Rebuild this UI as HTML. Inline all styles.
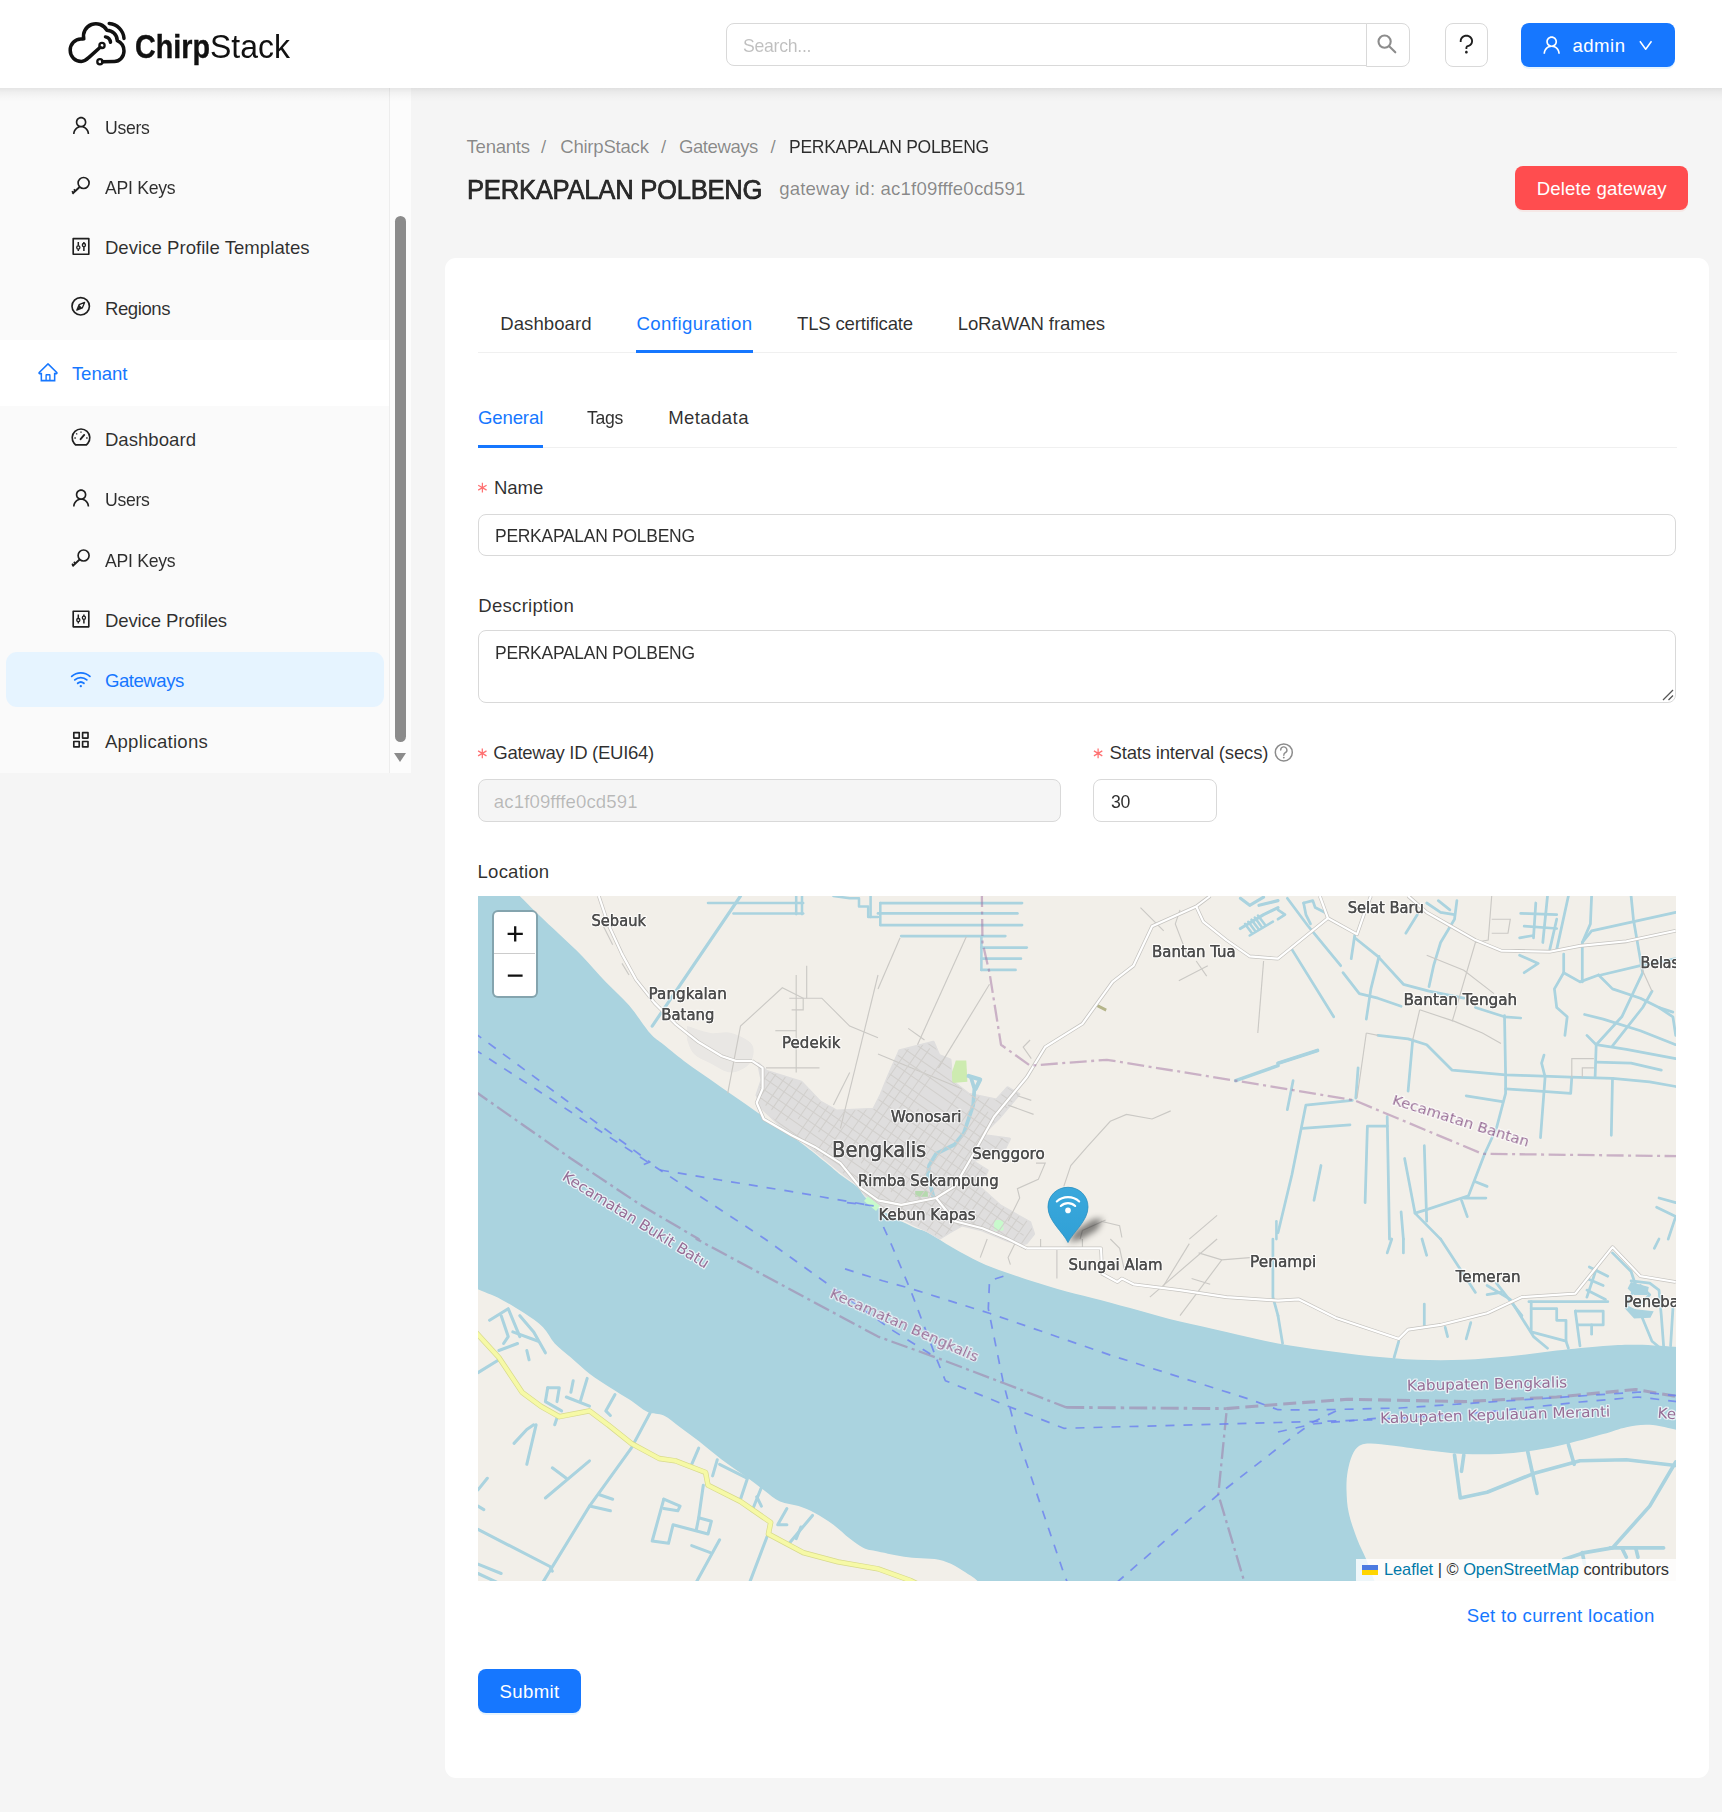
<!DOCTYPE html>
<html lang="en">
<head>
<meta charset="utf-8">
<title>ChirpStack - PERKAPALAN POLBENG</title>
<style>
*{box-sizing:border-box;margin:0;padding:0}
html,body{width:1722px;height:1812px;overflow:hidden;background:#f5f5f5}
body{position:relative;font-family:"Liberation Sans",sans-serif;color:rgba(0,0,0,0.88);font-size:18.6px}
.abs{position:absolute}
.t{position:absolute;z-index:7;white-space:nowrap;line-height:30px;height:30px;font-size:18.6px}
#header{position:absolute;left:0;top:0;width:1722px;height:88px;background:#fff;z-index:5}
#hshadow{position:absolute;left:0;top:88px;width:1722px;height:14px;background:linear-gradient(to bottom,rgba(0,0,0,0.085),rgba(0,0,0,0.045) 30%,rgba(0,0,0,0.015) 65%,rgba(0,0,0,0));z-index:6;pointer-events:none}
#sider{position:absolute;left:0;top:88px;width:390px;height:685px;background:#fafafa;border-right:1px solid #ededed}
#strack{position:absolute;left:390px;top:88px;width:21px;height:685px;background:#fcfcfc}
#sthumb{position:absolute;left:395px;top:216px;width:11px;height:526px;border-radius:6px;background:#8b8b8b}
#sarrow{position:absolute;left:394px;top:753px;width:0;height:0;border-left:6.5px solid transparent;border-right:6.5px solid transparent;border-top:9px solid #8b8b8b}
#tenantband{position:absolute;left:0;top:340px;width:389px;height:66px;background:#fff}
#selitem{position:absolute;left:5.5px;top:652px;width:378.5px;height:55px;border-radius:11px;background:#e6f4ff}
#card{position:absolute;left:445px;top:258px;width:1264px;height:1520px;background:#fff;border-radius:11px}
.inp{position:absolute;border:1.4px solid #d9d9d9;border-radius:8px;background:#fff}
.btn{position:absolute;border-radius:8px}
svg{position:absolute;overflow:visible}
</style>
</head>
<body>
<!-- header -->
<div id="header">
  <!-- logo -->
  <svg id="logo" style="left:0;top:0" width="140" height="88" viewBox="0 0 140 88" fill="none" stroke="#111" stroke-width="3.5" stroke-linecap="round" stroke-linejoin="round">
    <path d="M100.2 47.3 L88.7 57.6 C86.5 59.8 84 61.4 81.3 61.4 C75 61.4 70.2 56.5 70.2 50.2 C70.2 44 75 39 80.9 39 C81.8 39 82.9 39 83.8 38.8 A12.4 12.4 0 0 1 106.8 30.2 A10.7 10.7 0 0 1 117.3 40.6 C121.5 42.6 124 46.5 124 51 C124 57 119.5 61.5 114.4 61.5 L102.6 61.7"/>
    <path d="M109.2 23.5 A16 16 0 0 1 124 38.4"/>
    <path d="M105.5 36.9 A6.3 6.3 0 0 1 110.5 42.3"/>
    <circle cx="102" cy="45.4" r="2.6" stroke-width="2.3"/>
    <circle cx="99.9" cy="61.7" r="2.6" stroke-width="2.3"/>
  </svg>
  <span class="t" id="lg1" style="left:135.3px;top:25.7px;height:40px;line-height:40px;font-size:34px;font-weight:700;color:#111;transform-origin:0 0;transform:scaleX(0.845);-webkit-text-stroke:0.4px #111">Chirp</span>
  <span class="t" id="lg2" style="left:210.3px;top:25.7px;height:40px;line-height:40px;font-size:34px;font-weight:400;color:#111;transform-origin:0 0;transform:scaleX(0.94)">Stack</span>
  <!-- search -->
  <div class="inp" style="left:726px;top:23px;width:641px;height:42.8px;border-radius:8px 0 0 8px"></div>
  <div class="inp" style="left:1365.6px;top:23px;width:44px;height:43.8px;border-radius:0 8px 8px 0"></div>
  <svg style="left:1376.3px;top:32.6px" width="22" height="22" viewBox="0 0 22 22" fill="none" stroke="#8c8c8c" stroke-width="2.1" stroke-linecap="round"><circle cx="8.6" cy="8.6" r="6.1"/><path d="M13.2 13.2 L19.3 19.3"/></svg>
  <!-- help -->
  <div class="inp" style="left:1444.5px;top:23px;width:43.5px;height:44px"></div>
  <!-- admin -->
  <div class="btn" style="left:1521px;top:23px;width:153.5px;height:44px;background:#1677ff;box-shadow:0 2px 0 rgba(5,145,255,0.1)"></div>
</div>
<div id="hshadow"></div>
<!-- sider -->
<div id="sider"></div>
<div id="tenantband"></div>
<div id="selitem"></div>
<div id="strack"></div><div id="sthumb"></div><div id="sarrow"></div>
<!-- content -->
<div class="btn" style="left:1514.7px;top:166.4px;width:173.5px;height:43.6px;background:#ff4d4f;box-shadow:0 2px 0 rgba(255,38,5,0.06)"></div>
<div id="card"></div>
<!-- tabs lines -->
<div class="abs" style="left:477.5px;top:351.6px;width:1199px;height:1.4px;background:#f0f0f0"></div>
<div class="abs" style="left:636px;top:350.2px;width:117px;height:2.8px;background:#1677ff"></div>
<div class="abs" style="left:477.5px;top:446.6px;width:1199px;height:1.4px;background:#f0f0f0"></div>
<div class="abs" style="left:477.9px;top:445.2px;width:65.5px;height:2.8px;background:#1677ff"></div>
<!-- inputs -->
<div class="inp" style="left:477.6px;top:513.6px;width:1198.6px;height:42.4px"></div>
<div class="inp" style="left:477.6px;top:630.1px;width:1198.6px;height:73.3px"></div>
<svg style="left:1662px;top:689px" width="12" height="12" viewBox="0 0 12 12" stroke="#555" stroke-width="1.3" fill="none"><path d="M1 11 L11 1 M6.5 11 L11 6.5"/></svg>
<div class="inp" style="left:477.6px;top:779.2px;width:583px;height:43px;background:#f5f5f5"></div>
<div class="inp" style="left:1093.3px;top:779.2px;width:123.4px;height:43px"></div>
<!-- submit -->
<div class="btn" style="left:478px;top:1669.4px;width:102.8px;height:43.4px;background:#1677ff;box-shadow:0 2px 0 rgba(5,145,255,0.1)"></div>
<!-- sidebar icons -->
<svg id="icons" style="left:0;top:0;z-index:7" width="420" height="780" viewBox="0 0 420 780" fill="none" stroke="#1f1f1f" stroke-width="1.65" stroke-linecap="butt" stroke-linejoin="round">
  <defs>
    <path id="i-user" d="M858.5 763.6a374 374 0 00-80.6-119.5 375.63 375.63 0 00-119.5-80.6c-.4-.2-.8-.3-1.200-.500C719.500 518 760 444.700 760 362c0-137-111-248-248-248S264 225 264 362c0 82.700 40.500 156 102.800 201.100-.400.200-.800.300-1.200.500-44.800 18.900-85 46-119.500 80.600a375.630 375.630 0 00-80.600 119.500A371.700 371.700 0 00136 901.800a8 8 0 008 8.200h60c4.400 0 7.900-3.500 8-7.800 2-77.200 33-149.500 87.800-204.300 56.700-56.700 132-87.900 212.200-87.900s155.500 31.200 212.200 87.900C779 752.700 810 825 812 902.200c.1 4.400 3.600 7.800 8 7.800h60a8 8 0 008-8.200c-1-47.800-10.900-94.300-29.500-138.200zM512 534c-45.900 0-89.100-17.900-121.600-50.400S340 407.900 340 362c0-45.900 17.900-89.100 50.400-121.600S466.100 190 512 190s89.100 17.900 121.600 50.400S684 316.100 684 362c0 45.900-17.900 89.100-50.400 121.600S557.900 534 512 534z" fill="#1f1f1f" stroke="none"/>
    <g id="i-key"><circle cx="13.6" cy="7.6" r="5.5"/><path d="M9.6 11.6 L2.4 18.4" stroke-width="1.9"/><path d="M5.6 15.7 L3.8 14 M3.6 17.5 L1.9 15.8" stroke-width="1.5"/></g>
    <g id="i-control"><rect x="3.2" y="3.2" width="15.6" height="15.6"/><path d="M8.3 6.6 V10.4 M8.3 13.8 V15.6 M13.9 6.6 V8 M13.9 11.4 V15.6" stroke-width="1.5"/><circle cx="8.3" cy="12.1" r="1.6" stroke-width="1.3"/><circle cx="13.9" cy="9.7" r="1.6" stroke-width="1.3"/></g>
    <g id="i-compass"><circle cx="11" cy="11" r="8.7"/><path d="M14.9 7.1 L12.6 12.6 L7.1 14.9 L9.4 9.4 Z" stroke-width="1.3"/><path d="M9.6 9.6 L12.4 12.4 L7.4 14.6Z" fill="#1f1f1f" stroke="none"/></g>
    <g id="i-dash"><path d="M4.2 16.4 A8.8 8.8 0 1 1 17.8 16.4 L16.4 17.9 H5.6 Z"/><path d="M10.6 12.2 L14.2 7.9" stroke-width="1.9" stroke-linecap="round"/><path d="M11 4.4 V5.8 M6.2 6.4 L7.2 7.4 M4.4 11 H5.8 M16.2 11 H17.6" stroke-width="1.3"/></g>
    <g id="i-wifi" stroke-linecap="round"><path d="M1.9 8.2 A13.4 13.4 0 0 1 20.1 8.2" stroke-width="1.8"/><path d="M5 11.7 A9 9 0 0 1 17 11.7" stroke-width="1.8"/><path d="M7.9 15.1 A4.8 4.8 0 0 1 14.1 15.1" stroke-width="1.8"/><circle cx="11" cy="18" r="1.15" fill="#1677ff" stroke="none"/></g>
    <g id="i-app"><rect x="3.9" y="3.9" width="5.4" height="5.4"/><rect x="12.7" y="3.9" width="5.4" height="5.4"/><rect x="3.9" y="12.7" width="5.4" height="5.4"/><rect x="12.7" y="12.7" width="5.4" height="5.4"/></g>
    <path id="i-home" d="M946.5 505L560.1 118.8l-25.900-25.900a31.500 31.500 0 00-44.400 0L77.500 505a63.900 63.900 0 00-18.800 46c.4 35.200 29.700 63.300 64.900 63.300h42.500V940h691.800V614.300h43.400c17.100 0 33.200-6.700 45.300-18.800a63.600 63.600 0 0018.700-45.300c0-17-6.700-33.100-18.800-45.200zM568 868H456V664h112v204zm217.900-325.700V868H632V640c0-22.100-17.900-40-40-40H432c-22.100 0-40 17.900-40 40v228H238.100V542.300h-96l370-369.700 23.100 23.100L882 542.300h-96.100z" fill="#1677ff" stroke="none"/>
  </defs>
  <use href="#i-user" transform="translate(70.1 114.4) scale(0.021484)"/>
  <use href="#i-key" transform="translate(70 175.4)"/>
  <use href="#i-control" transform="translate(70 235.4)"/>
  <use href="#i-compass" transform="translate(69.7 295.3)"/>
  <use href="#i-home" transform="translate(37 361.2) scale(0.021484)"/>
  <use href="#i-dash" transform="translate(70 427)"/>
  <use href="#i-user" transform="translate(70.1 486.9) scale(0.021484)"/>
  <use href="#i-key" transform="translate(70 547.9)"/>
  <use href="#i-control" transform="translate(70 608)"/>
  <g stroke="#1677ff"><use href="#i-wifi" transform="translate(69.8 668.2)"/></g>
  <use href="#i-app" transform="translate(69.9 728.8)"/>
</svg>
<svg id="hicons" style="left:0;top:0;z-index:8" width="1722" height="88" viewBox="0 0 1722 88">
  <path transform="translate(1540.5 33.8) scale(0.0218)" fill="#fff" d="M858.5 763.6a374 374 0 00-80.6-119.5 375.63 375.63 0 00-119.5-80.6c-.4-.2-.8-.3-1.200-.500C719.500 518 760 444.700 760 362c0-137-111-248-248-248S264 225 264 362c0 82.700 40.500 156 102.800 201.100-.400.200-.800.300-1.200.500-44.800 18.900-85 46-119.500 80.600a375.630 375.630 0 00-80.600 119.500A371.700 371.700 0 00136 901.800a8 8 0 008 8.200h60c4.400 0 7.900-3.500 8-7.800 2-77.200 33-149.500 87.800-204.300 56.700-56.700 132-87.900 212.200-87.900s155.500 31.200 212.200 87.900C779 752.700 810 825 812 902.200c.1 4.400 3.600 7.800 8 7.800h60a8 8 0 008-8.200c-1-47.800-10.900-94.300-29.500-138.200zM512 534c-45.900 0-89.100-17.900-121.600-50.400S340 407.900 340 362c0-45.900 17.900-89.100 50.400-121.600S466.100 190 512 190s89.100 17.900 121.600 50.400S684 316.100 684 362c0 45.900-17.900 89.100-50.400 121.600S557.900 534 512 534z"/>
  <path d="M1639.9 41.3 L1645.7 49.2 L1651.5 41.3" fill="none" stroke="#fff" stroke-width="1.5" stroke-linejoin="round"/>
  <path transform="translate(1454 31.8) scale(0.0242)" fill="#1f1f1f" d="M764 280.900c-14-30.600-33.900-58.100-59.300-81.600C653.100 151.400 584.600 125 512 125s-141.100 26.400-192.700 74.200c-25.400 23.600-45.300 51-59.300 81.700-14.600 32-22 65.900-22 100.900v27c0 6.200 5 11.200 11.200 11.200h54c6.200 0 11.200-5 11.200-11.200v-27c0-99.500 88.600-180.400 197.600-180.400s197.600 80.900 197.600 180.400c0 40.800-14.500 79.200-42 111.200-27.200 31.700-65.600 54.400-108.100 64-24.300 5.500-46.200 19.200-61.700 38.800a110.850 110.850 0 00-23.900 68.600v31.400c0 6.200 5 11.200 11.200 11.200h54c6.200 0 11.200-5 11.200-11.200v-31.400c0-15.700 10.900-29.500 26-32.900 58.400-13.200 111.400-44.700 149.300-88.700 19.100-22.300 34-47.100 44.300-74 10.700-27.900 16.100-57.200 16.100-87 0-35-7.400-69-22-100.900zM512 787c-30.900 0-56 25.100-56 56s25.100 56 56 56 56-25.100 56-56-25.100-56-56-56z"/>
</svg>
<svg id="ficons" style="left:0;top:0;z-index:7" width="1722" height="900" viewBox="0 0 1722 900" fill="none">
  <path d="M482.4 482.7 L482.4 492.5 M478.2 485.2 L486.6 490.1 M486.6 485.2 L478.2 490.1 M482.3 748.5 L482.3 758.3 M478.1 750.9 L486.5 755.9 M486.5 750.9 L478.1 755.9 M1098.1 748.5 L1098.1 758.3 M1093.9 750.9 L1102.3 755.9 M1102.3 750.9 L1093.9 755.9" stroke="#ff4d4f" stroke-opacity="0.8" stroke-width="1.25"/>
  <circle cx="1283.8" cy="752.4" r="8.5" stroke="#8c8c8c" stroke-width="1.5"/>
  <path d="M1280.7 750 A3.1 3.1 0 1 1 1285.3 752.7 C1284.2 753.4 1283.8 754 1283.8 755.2" stroke="#8c8c8c" stroke-width="1.4" stroke-linecap="round"/><circle cx="1283.8" cy="757.6" r="0.95" fill="#8c8c8c"/>
</svg>
<span class="t" id="s1" style="left:104.9px;top:112.5px;font-size:18.6px;color:rgba(0,0,0,0.82);letter-spacing:-0.300px;transform-origin:0 50%;transform:scaleX(0.948);">Users</span>
<span class="t" id="s2" style="left:104.9px;top:173.0px;font-size:18.6px;color:rgba(0,0,0,0.82);letter-spacing:-0.300px;transform-origin:0 50%;transform:scaleX(0.9491);">API Keys</span>
<span class="t" id="s3" style="left:104.9px;top:233.0px;font-size:18.6px;color:rgba(0,0,0,0.82);letter-spacing:0.018px;">Device Profile Templates</span>
<span class="t" id="s4" style="left:104.9px;top:293.5px;font-size:18.6px;color:rgba(0,0,0,0.82);letter-spacing:-0.422px;">Regions</span>
<span class="t" id="s5" style="left:71.9px;top:359.0px;font-size:18.6px;color:#1677ff;letter-spacing:-0.066px;">Tenant</span>
<span class="t" id="s6" style="left:104.9px;top:425.0px;font-size:18.6px;color:rgba(0,0,0,0.82);letter-spacing:0.016px;">Dashboard</span>
<span class="t" id="s7" style="left:104.9px;top:485.0px;font-size:18.6px;color:rgba(0,0,0,0.82);letter-spacing:-0.300px;transform-origin:0 50%;transform:scaleX(0.948);">Users</span>
<span class="t" id="s8" style="left:104.9px;top:545.5px;font-size:18.6px;color:rgba(0,0,0,0.82);letter-spacing:-0.300px;transform-origin:0 50%;transform:scaleX(0.9491);">API Keys</span>
<span class="t" id="s9" style="left:104.9px;top:606.0px;font-size:18.6px;color:rgba(0,0,0,0.82);letter-spacing:-0.123px;">Device Profiles</span>
<span class="t" id="s10" style="left:104.9px;top:666.0px;font-size:18.6px;color:#1677ff;letter-spacing:-0.470px;">Gateways</span>
<span class="t" id="s11" style="left:104.9px;top:726.5px;font-size:18.6px;color:rgba(0,0,0,0.82);letter-spacing:0.239px;">Applications</span>
<span class="t" id="h1" style="left:742.5px;top:30.5px;font-size:18.6px;color:rgba(0,0,0,0.25);letter-spacing:-0.300px;transform-origin:0 50%;transform:scaleX(0.9511);">Search...</span>
<span class="t" id="h2" style="left:1572.5px;top:30.5px;font-size:18.6px;color:#fff;letter-spacing:0.461px;">admin</span>
<span class="t" id="b1" style="left:466.6px;top:132.2px;font-size:18.6px;color:rgba(0,0,0,0.45);letter-spacing:-0.288px;">Tenants</span>
<span class="t" id="b2" style="left:541.0px;top:132.2px;font-size:18.6px;color:rgba(0,0,0,0.45);">/</span>
<span class="t" id="b3" style="left:560.2px;top:132.2px;font-size:18.6px;color:rgba(0,0,0,0.45);letter-spacing:-0.238px;">ChirpStack</span>
<span class="t" id="b4" style="left:661.0px;top:132.2px;font-size:18.6px;color:rgba(0,0,0,0.45);">/</span>
<span class="t" id="b5" style="left:679.0px;top:132.2px;font-size:18.6px;color:rgba(0,0,0,0.45);letter-spacing:-0.470px;">Gateways</span>
<span class="t" id="b6" style="left:770.5px;top:132.2px;font-size:18.6px;color:rgba(0,0,0,0.45);">/</span>
<span class="t" id="b7" style="left:789.4px;top:132.2px;font-size:18.6px;color:rgba(0,0,0,0.82);letter-spacing:-0.300px;transform-origin:0 50%;transform:scaleX(0.9412);">PERKAPALAN POLBENG</span>
<span class="t" id="t1" style="left:466.6px;top:174.8px;font-size:26.8px;color:rgba(0,0,0,0.82);letter-spacing:-0.300px;transform-origin:0 50%;transform:scaleX(0.9577);-webkit-text-stroke:0.65px rgba(0,0,0,0.88);">PERKAPALAN POLBENG</span>
<span class="t" id="t2" style="left:779.2px;top:174.3px;font-size:18.6px;color:rgba(0,0,0,0.45);letter-spacing:0.180px;">gateway id: ac1f09fffe0cd591</span>
<span class="t" id="t3" style="left:1536.7px;top:174.0px;font-size:18.6px;color:#fff;letter-spacing:0.125px;">Delete gateway</span>
<span class="t" id="a1" style="left:500.2px;top:308.5px;font-size:18.6px;color:rgba(0,0,0,0.82);letter-spacing:0.054px;">Dashboard</span>
<span class="t" id="a2" style="left:636.5px;top:308.5px;font-size:18.6px;color:#1677ff;letter-spacing:0.408px;">Configuration</span>
<span class="t" id="a3" style="left:797.0px;top:308.5px;font-size:18.6px;color:rgba(0,0,0,0.82);letter-spacing:-0.189px;">TLS certificate</span>
<span class="t" id="a4" style="left:957.7px;top:308.5px;font-size:18.6px;color:rgba(0,0,0,0.82);letter-spacing:-0.142px;">LoRaWAN frames</span>
<span class="t" id="c1" style="left:477.9px;top:403.3px;font-size:18.6px;color:#1677ff;letter-spacing:-0.126px;">General</span>
<span class="t" id="c2" style="left:587.2px;top:403.3px;font-size:18.6px;color:rgba(0,0,0,0.82);letter-spacing:-0.300px;transform-origin:0 50%;transform:scaleX(0.9484);">Tags</span>
<span class="t" id="c3" style="left:668.2px;top:403.3px;font-size:18.6px;color:rgba(0,0,0,0.82);letter-spacing:0.396px;">Metadata</span>
<span class="t" id="f2" style="left:493.9px;top:472.8px;font-size:18.6px;color:rgba(0,0,0,0.82);letter-spacing:-0.070px;">Name</span>
<span class="t" id="f3" style="left:494.6px;top:520.8px;font-size:18.6px;color:rgba(0,0,0,0.82);letter-spacing:-0.300px;transform-origin:0 50%;transform:scaleX(0.9407);">PERKAPALAN POLBENG</span>
<span class="t" id="f4" style="left:478.3px;top:590.6px;font-size:18.6px;color:rgba(0,0,0,0.82);letter-spacing:0.248px;">Description</span>
<span class="t" id="f5" style="left:494.6px;top:638.2px;font-size:18.6px;color:rgba(0,0,0,0.82);letter-spacing:-0.300px;transform-origin:0 50%;transform:scaleX(0.9407);">PERKAPALAN POLBENG</span>
<span class="t" id="f7" style="left:493.3px;top:738.4px;font-size:18.6px;color:rgba(0,0,0,0.82);letter-spacing:-0.316px;">Gateway ID (EUI64)</span>
<span class="t" id="f8" style="left:493.8px;top:786.5px;font-size:18.6px;color:rgba(0,0,0,0.25);letter-spacing:0.120px;">ac1f09fffe0cd591</span>
<span class="t" id="f10" style="left:1109.5px;top:738.4px;font-size:18.6px;color:rgba(0,0,0,0.82);letter-spacing:-0.218px;">Stats interval (secs)</span>
<span class="t" id="f11" style="left:1110.6px;top:786.5px;font-size:18.6px;color:rgba(0,0,0,0.82);letter-spacing:-0.300px;transform-origin:0 50%;transform:scaleX(0.9516);">30</span>
<span class="t" id="f12" style="left:477.6px;top:856.6px;font-size:18.6px;color:rgba(0,0,0,0.82);letter-spacing:0.184px;">Location</span>
<span class="t" id="f13" style="left:1466.7px;top:1600.8px;font-size:18.6px;color:#1677ff;letter-spacing:0.306px;">Set to current location</span>
<span class="t" id="f14" style="left:499.6px;top:1677.0px;font-size:18.6px;color:#fff;letter-spacing:0.325px;">Submit</span>
<div id="map" class="abs" style="left:477.8px;top:896px;width:1198.6px;height:684.8px;background:#f2efe9;overflow:hidden">
<svg style="left:-477.8px;top:-896px" width="1722" height="1812" viewBox="0 0 1722 1812">
<g id="tiles" filter="url(#soft)"><defs><filter id="soft" x="0" y="0" width="100%" height="100%" filterUnits="userSpaceOnUse"><feGaussianBlur stdDeviation="0.65"/></filter></defs>
<path d="M474 892 L519.8 892 L519.8 896 C522.9 899.1 531.8 908.2 538.4 914.6 C545.0 921.0 551.9 927.3 559.3 934.3 C566.6 941.3 574.8 948.4 582.5 956.4 C590.2 964.4 598.0 973.9 605.8 982 C613.5 990.1 621.6 996.7 629 1005.2 C636.4 1013.7 644.1 1026.4 649.9 1033 C655.7 1039.6 657.6 1039.7 663.8 1044.7 C670.0 1049.7 679.2 1057.4 687 1063.2 C694.8 1069.0 702.5 1074.1 710.3 1079.5 C718.0 1084.9 725.8 1090.4 733.5 1095.8 C741.2 1101.2 749.0 1106.6 756.7 1112 C764.5 1117.4 772.2 1122.9 780 1128.3 C787.8 1133.7 795.5 1138.7 803.2 1144.5 C810.9 1150.3 820.2 1158.1 826.4 1163.1 C832.6 1168.1 835.2 1170.7 840.4 1174.7 C845.6 1178.7 853.1 1183.1 857.4 1187 C861.7 1190.9 861.6 1193.9 866 1198 C870.4 1202.1 875.7 1206.6 883.6 1211.4 C891.5 1216.2 906.0 1223.5 913.2 1227 C920.5 1230.5 920.4 1228.8 927.1 1232.3 C933.8 1235.8 944.5 1243.1 953.2 1248 C961.9 1252.9 970.7 1257.9 979.4 1261.9 C988.1 1266.0 996.8 1269.1 1005.5 1272.3 C1014.2 1275.5 1021.4 1277.8 1031.6 1281 C1041.8 1284.2 1054.9 1288.3 1066.5 1291.5 C1078.1 1294.7 1089.0 1297.0 1101.3 1300.2 C1113.5 1303.4 1126.9 1307.2 1140 1310.7 C1153.1 1314.2 1165.6 1318.0 1180 1321.5 C1194.4 1325.0 1210.1 1328.2 1226.4 1331.9 C1242.7 1335.6 1261.7 1340.4 1278 1343.5 C1294.3 1346.6 1309.0 1348.4 1324.5 1350.5 C1340.0 1352.6 1355.4 1354.8 1370.9 1356.3 C1386.4 1357.8 1401.9 1359.2 1417.4 1359.8 C1432.9 1360.4 1448.3 1360.4 1463.8 1359.8 C1479.3 1359.2 1494.8 1357.8 1510.3 1356.3 C1525.8 1354.8 1541.2 1352.2 1556.7 1350.5 C1572.2 1348.8 1589.7 1346.9 1603.2 1345.9 C1616.8 1344.9 1625.2 1344.5 1638 1344.7 C1650.8 1344.9 1673.0 1346.6 1680 1347 L1680 1430.6 C1675.0 1429.6 1658.6 1425.4 1649.7 1424.8 C1640.8 1424.2 1634.2 1425.7 1626.4 1427.2 C1618.7 1428.8 1612.9 1431.4 1603.2 1434.1 C1593.5 1436.8 1580.0 1440.7 1568.4 1443.4 C1556.8 1446.1 1545.1 1448.7 1533.5 1450.4 C1521.9 1452.2 1510.3 1453.3 1498.7 1453.9 C1487.1 1454.5 1475.4 1454.5 1463.8 1453.9 C1452.2 1453.3 1440.6 1451.8 1429 1450.4 C1417.4 1449.0 1403.8 1446.9 1394.1 1445.7 C1384.4 1444.5 1376.7 1443.4 1370.9 1443.4 C1365.1 1443.4 1362.4 1443.8 1359.3 1445.7 C1356.2 1447.6 1354.2 1450.7 1352.3 1455 C1350.4 1459.3 1348.7 1465.5 1347.7 1471.3 C1346.7 1477.1 1346.3 1482.9 1346.5 1489.9 C1346.7 1496.9 1347.0 1505.0 1348.8 1513.1 C1350.5 1521.2 1354.1 1531.0 1357 1538.7 C1359.9 1546.5 1363.2 1552.0 1366.3 1559.6 C1369.4 1567.1 1374.0 1579.9 1375.6 1584 L980.2 1584 C978.7 1582.6 977.1 1579.7 970.9 1575.8 C964.7 1571.9 953.5 1563.8 943 1560.7 C932.5 1557.6 919.0 1558.8 908.2 1557.2 C897.4 1555.7 885.4 1553.0 878 1551.4 C870.6 1549.9 868.3 1550.0 863.6 1547.9 C858.9 1545.8 854.7 1542.5 849.7 1538.6 C844.7 1534.7 839.2 1529.0 833.4 1524.7 C827.6 1520.5 820.6 1516.2 814.8 1513.1 C809.0 1510.0 804.4 1508.0 798.6 1506.1 C792.8 1504.2 785.8 1504.2 780 1501.5 C774.2 1498.8 769.5 1494.2 763.7 1489.9 C757.9 1485.7 752.1 1481.0 745.1 1476 C738.1 1471.0 729.6 1465.5 721.9 1459.7 C714.2 1453.9 705.7 1446.4 698.7 1441 C691.7 1435.6 685.9 1431.5 680.1 1427.2 C674.3 1423.0 669.2 1418.0 663.8 1415.5 C658.4 1413.0 653.4 1414.7 647.6 1412 C641.8 1409.3 635.2 1403.3 629 1399.3 C622.8 1395.2 617.0 1392.0 610.4 1387.7 C603.8 1383.4 596.1 1378.7 589.5 1373.7 C582.9 1368.7 576.7 1362.5 570.9 1357.5 C565.1 1352.5 559.4 1348.5 554.7 1343.5 C550.1 1338.5 548.0 1332.3 543 1327.3 C538.0 1322.3 531.5 1317.9 524.5 1313.3 C517.5 1308.7 509.6 1303.7 501.2 1299.4 C492.8 1295.2 478.5 1289.7 474 1287.8 Z" fill="#aad3df"/>
<path d="M758.6 1063.7 L766.0 1071.1 L801.3 1082.3 L819.9 1101.8 L836.6 1111.1 L873.8 1109.2 L881.2 1094.3 L888.7 1075.8 L899.8 1050.7 L933.3 1042.3 L938.8 1055.3 L950.0 1060.0 L951.9 1081.3 L968.6 1094.3 L996.5 1099.9 L1007.6 1087.8 L1018.8 1094.3 L998.3 1118.5 L981.6 1135.2 L1009.5 1138.9 L1003.9 1150.1 L972.3 1161.2 L987.2 1170.5 L979.7 1187.3 L1000.2 1205.8 L1029.9 1222.6 L1033.6 1233.7 L1026.2 1243.0 L1020 1244 L1008 1240.5 L982.5 1230 L962 1225 L948 1233 L940 1238 L927.1 1230.5 L913.2 1224 L883.6 1208.5 L866 1195 L857.4 1184 L840.4 1171 L826.4 1159.5 L803.2 1141 L780 1125 L762 1108 L757 1095 L762 1080Z" fill="#dfdede" stroke="#dfdede" stroke-width="3" stroke-linejoin="round"/>
<path d="M687.1 1026.1 C691.0 1027.2 702.9 1031.8 710.3 1033.0 C717.6 1034.2 724.2 1031.0 731.2 1033.0 C738.2 1035.0 749.0 1039.7 752.1 1044.7 C755.2 1049.7 753.3 1058.6 749.8 1063.2 C746.3 1067.8 737.8 1072.5 731.2 1072.5 C724.6 1072.5 716.5 1066.3 710.3 1063.2 C704.1 1060.1 697.9 1057.9 694.0 1054.0 C690.1 1050.1 688.2 1042.3 687.1 1040.0Z" fill="#e9e7e4"/>
<path d="M955.8 1060.5 L966.3 1060.5 L967.4 1081.8 L952.3 1083.0 L951.9 1072.5Z" fill="#cdebb0"/>
<path d="M994.1 1220.0 L1003.4 1220.0 L1003.4 1230.5 L994.1 1230.5Z" fill="#c8facc"/>
<path d="M915.2 1191.0 L927.9 1191.0 L927.9 1196.8 L915.2 1196.8Z" fill="#b5d9ae"/>
<path d="M868 1196 L880 1206 L876 1211 L864 1201Z" fill="#c8facc"/>
<path d="M1097.5 1004.0 L1106.8 1008.7 L1105.6 1011.4 L1096.8 1007.0Z" fill="#b5b58a"/>
<path d="M740.5 896.0 L652.2 1026.1" stroke="#aad3df" fill="none" stroke-linecap="round" stroke-linejoin="round" stroke-width="3.15"/>
<path d="M708.0 903.0 L803.2 903.0" stroke="#aad3df" fill="none" stroke-linecap="round" stroke-linejoin="round" stroke-width="2.55"/>
<path d="M733.5 913.4 L803.2 913.4" stroke="#aad3df" fill="none" stroke-linecap="round" stroke-linejoin="round" stroke-width="2.55"/>
<path d="M796.2 896.0 L796.2 914.1" stroke="#aad3df" fill="none" stroke-linecap="round" stroke-linejoin="round" stroke-width="2.55"/>
<path d="M802.0 896.0 L802.0 914.1" stroke="#aad3df" fill="none" stroke-linecap="round" stroke-linejoin="round" stroke-width="2.55"/>
<path d="M833.4 896.0 L849.7 898.3 L859.0 898.3 L859.0 906.5 L868.2 906.5 L868.2 916.9 L878.0 916.9" stroke="#aad3df" fill="none" stroke-linecap="round" stroke-linejoin="round" stroke-width="2.55"/>
<path d="M870.6 896.0 L870.6 916.9" stroke="#aad3df" fill="none" stroke-linecap="round" stroke-linejoin="round" stroke-width="2.55"/>
<path d="M880.3 903.0 L1022.0 903.0" stroke="#aad3df" fill="none" stroke-linecap="round" stroke-linejoin="round" stroke-width="2.75"/>
<path d="M878.0 913.4 L1017.4 913.4" stroke="#aad3df" fill="none" stroke-linecap="round" stroke-linejoin="round" stroke-width="2.75"/>
<path d="M880.3 925.0 L1022.0 925.0" stroke="#aad3df" fill="none" stroke-linecap="round" stroke-linejoin="round" stroke-width="2.75"/>
<path d="M901.2 936.0 L1005.3 936.0" stroke="#aad3df" fill="none" stroke-linecap="round" stroke-linejoin="round" stroke-width="2.75"/>
<path d="M981.4 947.6 L1026.7 947.6" stroke="#aad3df" fill="none" stroke-linecap="round" stroke-linejoin="round" stroke-width="2.75"/>
<path d="M981.4 958.7 L1020.9 958.7" stroke="#aad3df" fill="none" stroke-linecap="round" stroke-linejoin="round" stroke-width="2.75"/>
<path d="M981.4 969.9 L1015.5 969.9" stroke="#aad3df" fill="none" stroke-linecap="round" stroke-linejoin="round" stroke-width="2.75"/>
<path d="M880.3 903.0 L880.3 925.0" stroke="#aad3df" fill="none" stroke-linecap="round" stroke-linejoin="round" stroke-width="2.55"/>
<path d="M981.4 936.0 L981.4 969.9" stroke="#aad3df" fill="none" stroke-linecap="round" stroke-linejoin="round" stroke-width="2.55"/>
<path d="M1278.0 1065.6 L1235.7 1080.7" stroke="#aad3df" fill="none" stroke-linecap="round" stroke-linejoin="round" stroke-width="3.55"/>
<path d="M1276.4 1221.2 L1276.4 1239.1" stroke="#aad3df" fill="none" stroke-linecap="round" stroke-linejoin="round" stroke-width="2.55"/>
<path d="M970.9 1077.2 L974.4 1088.8 L973.2 1105.1 L963.9 1132.9 L954.7 1144.5 L936.1 1153.8 L929.1 1165.5 L927.9 1174.7 L933.7 1198.0" stroke="#aad3df" fill="none" stroke-linecap="round" stroke-linejoin="round" stroke-width="3.75"/>
<path d="M968.6 1076.0 L980.2 1079.5 L975.6 1088.8" stroke="#aad3df" fill="none" stroke-linecap="round" stroke-linejoin="round" stroke-width="4.15"/>
<path d="M1240.4 898.3 L1249.7 905.3 L1263.6 897.2" stroke="#aad3df" fill="none" stroke-linecap="round" stroke-linejoin="round" stroke-width="3.15"/>
<path d="M1259.0 905.3 L1278.0 900.6" stroke="#aad3df" fill="none" stroke-linecap="round" stroke-linejoin="round" stroke-width="3.15"/>
<path d="M1240.4 928.5 L1263.6 914.6 L1278.0 907.6" stroke="#aad3df" fill="none" stroke-linecap="round" stroke-linejoin="round" stroke-width="3.15"/>
<path d="M1245.0 923.9 L1252.0 933.2" stroke="#aad3df" fill="none" stroke-linecap="round" stroke-linejoin="round" stroke-width="2.55"/>
<path d="M1248.3 921.8 L1255.2 931.1" stroke="#aad3df" fill="none" stroke-linecap="round" stroke-linejoin="round" stroke-width="2.55"/>
<path d="M1251.5 919.7 L1258.5 929.0" stroke="#aad3df" fill="none" stroke-linecap="round" stroke-linejoin="round" stroke-width="2.55"/>
<path d="M1254.8 917.6 L1261.7 926.9" stroke="#aad3df" fill="none" stroke-linecap="round" stroke-linejoin="round" stroke-width="2.55"/>
<path d="M1258.0 915.5 L1265.0 924.8" stroke="#aad3df" fill="none" stroke-linecap="round" stroke-linejoin="round" stroke-width="2.55"/>
<path d="M1249.7 935.5 L1272.9 921.6" stroke="#aad3df" fill="none" stroke-linecap="round" stroke-linejoin="round" stroke-width="2.55"/>
<path d="M1291.9 949.4 L1333.7 1016.8" stroke="#aad3df" fill="none" stroke-linecap="round" stroke-linejoin="round" stroke-width="2.75"/>
<path d="M1287.3 898.3 L1308.2 926.2 L1340.7 965.7" stroke="#aad3df" fill="none" stroke-linecap="round" stroke-linejoin="round" stroke-width="2.75"/>
<path d="M1354.7 937.8 L1377.9 956.4 L1403.4 984.3 L1429.0 991.2 L1463.8 998.2" stroke="#aad3df" fill="none" stroke-linecap="round" stroke-linejoin="round" stroke-width="2.75"/>
<path d="M1343.0 972.7 L1359.3 993.6 L1377.9 998.2 L1401.1 1006.3" stroke="#aad3df" fill="none" stroke-linecap="round" stroke-linejoin="round" stroke-width="2.75"/>
<path d="M1379.0 956.4 L1370.9 988.9 L1366.3 1019.1" stroke="#aad3df" fill="none" stroke-linecap="round" stroke-linejoin="round" stroke-width="2.75"/>
<path d="M1354.7 935.5 L1351.2 958.7" stroke="#aad3df" fill="none" stroke-linecap="round" stroke-linejoin="round" stroke-width="2.75"/>
<path d="M1456.9 900.6 L1454.5 919.2 L1440.6 942.5 L1433.6 965.7 L1429.0 986.6" stroke="#aad3df" fill="none" stroke-linecap="round" stroke-linejoin="round" stroke-width="2.75"/>
<path d="M1417.4 914.6 L1405.8 933.2" stroke="#aad3df" fill="none" stroke-linecap="round" stroke-linejoin="round" stroke-width="2.75"/>
<path d="M1426.7 903.0 L1440.6 912.3 L1454.5 914.6" stroke="#aad3df" fill="none" stroke-linecap="round" stroke-linejoin="round" stroke-width="2.75"/>
<path d="M1438.3 900.6 L1449.9 909.9" stroke="#aad3df" fill="none" stroke-linecap="round" stroke-linejoin="round" stroke-width="2.75"/>
<path d="M1377.9 1035.4 L1408.1 1038.9 L1426.7 1044.7 L1452.2 1070.2 L1505.6 1074.9 L1570.7 1077.2 L1612.5 1078.3 L1649.7 1081.8 L1675.7 1086.5" stroke="#aad3df" fill="none" stroke-linecap="round" stroke-linejoin="round" stroke-width="2.75"/>
<path d="M1412.7 1040.0 L1408.1 1091.1" stroke="#aad3df" fill="none" stroke-linecap="round" stroke-linejoin="round" stroke-width="2.75"/>
<path d="M1504.5 1015.6 L1505.6 1074.9 L1505.6 1093.4 L1496.4 1128.3 L1484.7 1153.8 L1468.5 1195.7 L1426.7 1209.6 L1415.0 1213.1" stroke="#aad3df" fill="none" stroke-linecap="round" stroke-linejoin="round" stroke-width="2.75"/>
<path d="M1475.4 1007.5 L1504.5 1016.8 L1520.7 1018.0" stroke="#aad3df" fill="none" stroke-linecap="round" stroke-linejoin="round" stroke-width="2.75"/>
<path d="M1505.6 1088.8 L1570.7 1093.4 L1571.8 1077.2" stroke="#aad3df" fill="none" stroke-linecap="round" stroke-linejoin="round" stroke-width="2.75"/>
<path d="M1466.2 1095.8 L1502.2 1101.6" stroke="#aad3df" fill="none" stroke-linecap="round" stroke-linejoin="round" stroke-width="2.75"/>
<path d="M1544.0 1055.1 L1541.6 1063.2 L1545.1 1077.2 L1540.5 1137.6" stroke="#aad3df" fill="none" stroke-linecap="round" stroke-linejoin="round" stroke-width="2.75"/>
<path d="M1612.5 1078.3 L1611.3 1135.3" stroke="#aad3df" fill="none" stroke-linecap="round" stroke-linejoin="round" stroke-width="2.75"/>
<path d="M1595.1 1077.2 L1596.2 1044.7 L1621.8 1016.8 L1642.7 972.7 L1633.4 919.2 L1631.1 896.0" stroke="#aad3df" fill="none" stroke-linecap="round" stroke-linejoin="round" stroke-width="2.75"/>
<path d="M1586.9 1035.4 L1596.2 1044.7 L1626.4 1049.3 L1675.7 1058.6" stroke="#aad3df" fill="none" stroke-linecap="round" stroke-linejoin="round" stroke-width="2.75"/>
<path d="M1596.2 1062.1 L1631.1 1063.2 L1661.3 1070.2" stroke="#aad3df" fill="none" stroke-linecap="round" stroke-linejoin="round" stroke-width="2.75"/>
<path d="M1584.6 1014.5 L1603.2 1019.1 L1640.4 1030.7 L1675.7 1044.7" stroke="#aad3df" fill="none" stroke-linecap="round" stroke-linejoin="round" stroke-width="2.75"/>
<path d="M1612.5 1045.8 L1642.7 1007.5 L1652.0 991.2" stroke="#aad3df" fill="none" stroke-linecap="round" stroke-linejoin="round" stroke-width="2.75"/>
<path d="M1598.6 975.0 L1612.5 988.9 L1640.4 998.2 L1659.0 1007.5 L1672.9 1016.8 L1675.7 1035.4" stroke="#aad3df" fill="none" stroke-linecap="round" stroke-linejoin="round" stroke-width="2.75"/>
<path d="M1600.9 975.0 L1640.4 965.7 L1675.7 958.7" stroke="#aad3df" fill="none" stroke-linecap="round" stroke-linejoin="round" stroke-width="2.75"/>
<path d="M1582.3 981.9 L1582.3 942.5 L1591.6 930.8 L1675.7 912.3" stroke="#aad3df" fill="none" stroke-linecap="round" stroke-linejoin="round" stroke-width="2.75"/>
<path d="M1563.7 954.1 L1563.7 972.7 L1554.4 988.9 L1556.7 1007.5 L1567.2 1016.8 L1564.9 1035.4" stroke="#aad3df" fill="none" stroke-linecap="round" stroke-linejoin="round" stroke-width="2.75"/>
<path d="M1563.7 972.7 L1580.0 981.9 L1598.6 975.0" stroke="#aad3df" fill="none" stroke-linecap="round" stroke-linejoin="round" stroke-width="2.75"/>
<path d="M1520.7 913.4 L1556.7 914.6" stroke="#aad3df" fill="none" stroke-linecap="round" stroke-linejoin="round" stroke-width="2.75"/>
<path d="M1524.2 926.2 L1556.7 928.5" stroke="#aad3df" fill="none" stroke-linecap="round" stroke-linejoin="round" stroke-width="2.75"/>
<path d="M1519.6 937.8 L1533.5 935.5" stroke="#aad3df" fill="none" stroke-linecap="round" stroke-linejoin="round" stroke-width="2.75"/>
<path d="M1535.8 903.0 L1533.5 937.8" stroke="#aad3df" fill="none" stroke-linecap="round" stroke-linejoin="round" stroke-width="2.75"/>
<path d="M1547.5 896.0 L1542.8 942.5" stroke="#aad3df" fill="none" stroke-linecap="round" stroke-linejoin="round" stroke-width="2.75"/>
<path d="M1556.7 919.2 L1549.8 949.4" stroke="#aad3df" fill="none" stroke-linecap="round" stroke-linejoin="round" stroke-width="2.75"/>
<path d="M1568.4 896.0 L1556.7 949.4" stroke="#aad3df" fill="none" stroke-linecap="round" stroke-linejoin="round" stroke-width="2.75"/>
<path d="M1519.6 955.2 L1538.2 963.4 L1524.2 972.7" stroke="#aad3df" fill="none" stroke-linecap="round" stroke-linejoin="round" stroke-width="2.75"/>
<path d="M1591.6 896.0 L1590.4 923.9 L1582.3 942.5" stroke="#aad3df" fill="none" stroke-linecap="round" stroke-linejoin="round" stroke-width="2.75"/>
<path d="M1278.0 1063.2 L1317.5 1050.5" stroke="#aad3df" fill="none" stroke-linecap="round" stroke-linejoin="round" stroke-width="2.75"/>
<path d="M1293.1 1080.7 L1287.3 1109.7" stroke="#aad3df" fill="none" stroke-linecap="round" stroke-linejoin="round" stroke-width="2.75"/>
<path d="M1358.1 1067.9 L1355.8 1098.1" stroke="#aad3df" fill="none" stroke-linecap="round" stroke-linejoin="round" stroke-width="2.75"/>
<path d="M1352.3 1100.4 L1305.9 1105.1 L1291.9 1174.7 L1278.0 1232.8" stroke="#aad3df" fill="none" stroke-linecap="round" stroke-linejoin="round" stroke-width="2.75"/>
<path d="M1302.4 1128.3 L1350.0 1124.8" stroke="#aad3df" fill="none" stroke-linecap="round" stroke-linejoin="round" stroke-width="2.75"/>
<path d="M1387.2 1126.0 L1367.4 1126.0 L1365.1 1202.6" stroke="#aad3df" fill="none" stroke-linecap="round" stroke-linejoin="round" stroke-width="2.75"/>
<path d="M1387.2 1116.7 L1389.5 1239.1" stroke="#aad3df" fill="none" stroke-linecap="round" stroke-linejoin="round" stroke-width="2.75"/>
<path d="M1321.0 1165.5 L1314.0 1200.3" stroke="#aad3df" fill="none" stroke-linecap="round" stroke-linejoin="round" stroke-width="2.75"/>
<path d="M1424.3 1145.7 L1426.7 1221.2" stroke="#aad3df" fill="none" stroke-linecap="round" stroke-linejoin="round" stroke-width="2.75"/>
<path d="M1404.6 1158.5 L1415.0 1213.1 L1440.6 1239.1" stroke="#aad3df" fill="none" stroke-linecap="round" stroke-linejoin="round" stroke-width="2.75"/>
<path d="M1463.8 1198.0 L1485.9 1198.0" stroke="#aad3df" fill="none" stroke-linecap="round" stroke-linejoin="round" stroke-width="2.75"/>
<path d="M1475.4 1181.7 L1487.1 1186.4" stroke="#aad3df" fill="none" stroke-linecap="round" stroke-linejoin="round" stroke-width="2.75"/>
<path d="M1461.5 1200.3 L1467.3 1216.6" stroke="#aad3df" fill="none" stroke-linecap="round" stroke-linejoin="round" stroke-width="2.75"/>
<path d="M1401.1 1211.9 L1403.4 1239.1" stroke="#aad3df" fill="none" stroke-linecap="round" stroke-linejoin="round" stroke-width="2.75"/>
<path d="M1659.0 1198.0 L1675.7 1202.6" stroke="#aad3df" fill="none" stroke-linecap="round" stroke-linejoin="round" stroke-width="2.75"/>
<path d="M1656.6 1207.3 L1675.7 1216.6 L1668.2 1239.1" stroke="#aad3df" fill="none" stroke-linecap="round" stroke-linejoin="round" stroke-width="2.75"/>
<path d="M1659.0 1007.5 L1672.9 1012.1" stroke="#aad3df" fill="none" stroke-linecap="round" stroke-linejoin="round" stroke-width="2.75"/>
<path d="M1278.0 909.9 L1285.0 914.6 L1278.0 919.2" stroke="#aad3df" fill="none" stroke-linecap="round" stroke-linejoin="round" stroke-width="2.75"/>
<path d="M1303.6 903.0 L1312.8 900.6 L1315.2 907.6 L1324.5 912.3" stroke="#aad3df" fill="none" stroke-linecap="round" stroke-linejoin="round" stroke-width="2.75"/>
<path d="M1303.6 903.0 L1305.9 914.6 L1310.5 923.9" stroke="#aad3df" fill="none" stroke-linecap="round" stroke-linejoin="round" stroke-width="2.75"/>
<path d="M1278.0 1063.2 L1317.5 1050.5" stroke="#aad3df" fill="none" stroke-linecap="round" stroke-linejoin="round" stroke-width="3.75"/>
<path d="M649.9 1413.2 L631.3 1448.1 L589.5 1506.1 L543.0 1582.1" stroke="#aad3df" fill="none" stroke-linecap="round" stroke-linejoin="round" stroke-width="3.05"/>
<path d="M589.5 1506.1 L610.4 1510.8" stroke="#aad3df" fill="none" stroke-linecap="round" stroke-linejoin="round" stroke-width="3.05"/>
<path d="M598.8 1494.5 L612.7 1499.2" stroke="#aad3df" fill="none" stroke-linecap="round" stroke-linejoin="round" stroke-width="3.05"/>
<path d="M478.0 1529.4 L550.0 1566.5 L552.3 1571.2" stroke="#aad3df" fill="none" stroke-linecap="round" stroke-linejoin="round" stroke-width="3.05"/>
<path d="M478.0 1564.2 L501.2 1573.5" stroke="#aad3df" fill="none" stroke-linecap="round" stroke-linejoin="round" stroke-width="3.05"/>
<path d="M478.0 1573.5 L496.6 1582.1" stroke="#aad3df" fill="none" stroke-linecap="round" stroke-linejoin="round" stroke-width="3.05"/>
<path d="M545.4 1498.0 L589.5 1460.8" stroke="#aad3df" fill="none" stroke-linecap="round" stroke-linejoin="round" stroke-width="3.05"/>
<path d="M552.3 1467.8 L566.3 1478.3" stroke="#aad3df" fill="none" stroke-linecap="round" stroke-linejoin="round" stroke-width="3.05"/>
<path d="M533.7 1424.8 L526.8 1429.5 L514.0 1443.4" stroke="#aad3df" fill="none" stroke-linecap="round" stroke-linejoin="round" stroke-width="3.05"/>
<path d="M536.1 1424.8 L526.8 1464.3" stroke="#aad3df" fill="none" stroke-linecap="round" stroke-linejoin="round" stroke-width="3.05"/>
<path d="M478.0 1372.6 L498.9 1359.8" stroke="#aad3df" fill="none" stroke-linecap="round" stroke-linejoin="round" stroke-width="3.05"/>
<path d="M487.3 1478.3 L478.0 1489.9" stroke="#aad3df" fill="none" stroke-linecap="round" stroke-linejoin="round" stroke-width="3.05"/>
<path d="M478.0 1506.1 L483.8 1509.6" stroke="#aad3df" fill="none" stroke-linecap="round" stroke-linejoin="round" stroke-width="3.05"/>
<path d="M489.6 1320.3 L508.2 1308.7 L519.8 1336.6" stroke="#aad3df" fill="none" stroke-linecap="round" stroke-linejoin="round" stroke-width="3.05"/>
<path d="M501.2 1315.7 L508.2 1336.6 L503.6 1343.5" stroke="#aad3df" fill="none" stroke-linecap="round" stroke-linejoin="round" stroke-width="3.05"/>
<path d="M519.8 1315.7 L533.7 1331.9 L545.4 1352.8" stroke="#aad3df" fill="none" stroke-linecap="round" stroke-linejoin="round" stroke-width="3.05"/>
<path d="M512.8 1331.9 L538.4 1341.2" stroke="#aad3df" fill="none" stroke-linecap="round" stroke-linejoin="round" stroke-width="3.05"/>
<path d="M526.8 1350.5 L529.1 1359.8" stroke="#aad3df" fill="none" stroke-linecap="round" stroke-linejoin="round" stroke-width="3.05"/>
<path d="M498.9 1350.5 L517.5 1343.5" stroke="#aad3df" fill="none" stroke-linecap="round" stroke-linejoin="round" stroke-width="3.05"/>
<path d="M547.7 1387.7 L545.4 1401.6 L561.6 1410.9" stroke="#aad3df" fill="none" stroke-linecap="round" stroke-linejoin="round" stroke-width="3.05"/>
<path d="M547.7 1387.7 L559.3 1387.7 L557.0 1401.6" stroke="#aad3df" fill="none" stroke-linecap="round" stroke-linejoin="round" stroke-width="3.05"/>
<path d="M573.2 1380.7 L570.9 1392.3" stroke="#aad3df" fill="none" stroke-linecap="round" stroke-linejoin="round" stroke-width="3.05"/>
<path d="M587.2 1378.4 L580.2 1401.6" stroke="#aad3df" fill="none" stroke-linecap="round" stroke-linejoin="round" stroke-width="3.05"/>
<path d="M615.0 1394.6 L605.8 1410.9 L610.4 1415.5" stroke="#aad3df" fill="none" stroke-linecap="round" stroke-linejoin="round" stroke-width="3.05"/>
<path d="M566.3 1397.0 L589.5 1406.2" stroke="#aad3df" fill="none" stroke-linecap="round" stroke-linejoin="round" stroke-width="3.05"/>
<path d="M557.0 1417.9 L554.7 1424.8" stroke="#aad3df" fill="none" stroke-linecap="round" stroke-linejoin="round" stroke-width="3.05"/>
<path d="M698.7 1448.1 L691.7 1464.3" stroke="#aad3df" fill="none" stroke-linecap="round" stroke-linejoin="round" stroke-width="3.05"/>
<path d="M717.3 1459.7 L712.6 1475.9" stroke="#aad3df" fill="none" stroke-linecap="round" stroke-linejoin="round" stroke-width="3.05"/>
<path d="M719.6 1464.3 L747.5 1478.3 L740.5 1499.2" stroke="#aad3df" fill="none" stroke-linecap="round" stroke-linejoin="round" stroke-width="3.05"/>
<path d="M761.4 1487.5 L752.1 1510.8" stroke="#aad3df" fill="none" stroke-linecap="round" stroke-linejoin="round" stroke-width="3.05"/>
<path d="M756.7 1496.8 L761.4 1506.1" stroke="#aad3df" fill="none" stroke-linecap="round" stroke-linejoin="round" stroke-width="3.05"/>
<path d="M786.9 1508.5 L777.7 1524.7 L786.9 1524.7" stroke="#aad3df" fill="none" stroke-linecap="round" stroke-linejoin="round" stroke-width="3.05"/>
<path d="M812.5 1515.4 L789.3 1543.3" stroke="#aad3df" fill="none" stroke-linecap="round" stroke-linejoin="round" stroke-width="3.05"/>
<path d="M800.9 1527.0 L796.2 1538.7" stroke="#aad3df" fill="none" stroke-linecap="round" stroke-linejoin="round" stroke-width="3.05"/>
<path d="M703.3 1485.2 L698.7 1517.7 L696.4 1529.4" stroke="#aad3df" fill="none" stroke-linecap="round" stroke-linejoin="round" stroke-width="3.05"/>
<path d="M663.8 1499.2 L652.2 1541.0 L668.5 1543.3 L673.1 1524.7 L708.0 1534.0 L711.4 1521.2 L698.7 1517.7" stroke="#aad3df" fill="none" stroke-linecap="round" stroke-linejoin="round" stroke-width="3.05"/>
<path d="M663.8 1499.2 L680.1 1506.1 L677.8 1510.8 L663.8 1508.5" stroke="#aad3df" fill="none" stroke-linecap="round" stroke-linejoin="round" stroke-width="3.05"/>
<path d="M691.7 1545.6 L710.3 1552.6" stroke="#aad3df" fill="none" stroke-linecap="round" stroke-linejoin="round" stroke-width="3.05"/>
<path d="M719.6 1539.8 L696.4 1582.1" stroke="#aad3df" fill="none" stroke-linecap="round" stroke-linejoin="round" stroke-width="3.05"/>
<path d="M767.2 1536.3 L749.8 1582.1" stroke="#aad3df" fill="none" stroke-linecap="round" stroke-linejoin="round" stroke-width="3.05"/>
<path d="M1272.9 1239.0 L1272.9 1297.1 L1278.0 1315.7" stroke="#aad3df" fill="none" stroke-linecap="round" stroke-linejoin="round" stroke-width="2.75"/>
<path d="M1391.8 1239.0 L1387.2 1252.9" stroke="#aad3df" fill="none" stroke-linecap="round" stroke-linejoin="round" stroke-width="2.75"/>
<path d="M1403.4 1239.0 L1403.4 1252.9" stroke="#aad3df" fill="none" stroke-linecap="round" stroke-linejoin="round" stroke-width="2.75"/>
<path d="M1422.0 1239.0 L1426.7 1255.3" stroke="#aad3df" fill="none" stroke-linecap="round" stroke-linejoin="round" stroke-width="2.75"/>
<path d="M1440.6 1239.0 L1475.4 1292.4" stroke="#aad3df" fill="none" stroke-linecap="round" stroke-linejoin="round" stroke-width="2.75"/>
<path d="M1424.3 1304.0 L1424.3 1327.3" stroke="#aad3df" fill="none" stroke-linecap="round" stroke-linejoin="round" stroke-width="2.75"/>
<path d="M1470.8 1322.6 L1466.2 1338.9" stroke="#aad3df" fill="none" stroke-linecap="round" stroke-linejoin="round" stroke-width="2.75"/>
<path d="M1398.8 1341.2 L1394.1 1357.5" stroke="#aad3df" fill="none" stroke-linecap="round" stroke-linejoin="round" stroke-width="2.75"/>
<path d="M1278.0 1315.7 L1282.6 1343.5" stroke="#aad3df" fill="none" stroke-linecap="round" stroke-linejoin="round" stroke-width="2.75"/>
<path d="M1445.2 1327.3 L1447.6 1336.6" stroke="#aad3df" fill="none" stroke-linecap="round" stroke-linejoin="round" stroke-width="2.75"/>
<path d="M1487.1 1285.5 L1510.3 1299.4 L1533.5 1336.6 L1547.5 1348.2" stroke="#aad3df" fill="none" stroke-linecap="round" stroke-linejoin="round" stroke-width="2.75"/>
<path d="M1496.4 1283.1 L1521.9 1315.7" stroke="#aad3df" fill="none" stroke-linecap="round" stroke-linejoin="round" stroke-width="2.75"/>
<path d="M1487.1 1294.7 L1501.0 1292.4" stroke="#aad3df" fill="none" stroke-linecap="round" stroke-linejoin="round" stroke-width="2.75"/>
<path d="M1531.2 1301.7 L1531.2 1331.9 L1566.0 1341.2 L1568.4 1348.2" stroke="#aad3df" fill="none" stroke-linecap="round" stroke-linejoin="round" stroke-width="2.75"/>
<path d="M1531.2 1308.7 L1556.7 1308.7 L1556.7 1320.3 L1566.0 1320.3 L1566.0 1341.2" stroke="#aad3df" fill="none" stroke-linecap="round" stroke-linejoin="round" stroke-width="2.75"/>
<path d="M1528.9 1301.7 L1607.8 1301.7" stroke="#aad3df" fill="none" stroke-linecap="round" stroke-linejoin="round" stroke-width="2.75"/>
<path d="M1575.3 1311.0 L1580.0 1345.9" stroke="#aad3df" fill="none" stroke-linecap="round" stroke-linejoin="round" stroke-width="2.75"/>
<path d="M1575.3 1311.0 L1603.2 1311.0 L1603.2 1324.9 L1577.7 1324.9" stroke="#aad3df" fill="none" stroke-linecap="round" stroke-linejoin="round" stroke-width="2.75"/>
<path d="M1591.6 1324.9 L1591.6 1334.2" stroke="#aad3df" fill="none" stroke-linecap="round" stroke-linejoin="round" stroke-width="2.75"/>
<path d="M1589.3 1266.9 L1607.8 1276.2" stroke="#aad3df" fill="none" stroke-linecap="round" stroke-linejoin="round" stroke-width="2.75"/>
<path d="M1586.9 1278.5 L1603.2 1285.5" stroke="#aad3df" fill="none" stroke-linecap="round" stroke-linejoin="round" stroke-width="2.75"/>
<path d="M1586.9 1290.1 L1605.5 1299.4" stroke="#aad3df" fill="none" stroke-linecap="round" stroke-linejoin="round" stroke-width="2.75"/>
<path d="M1596.2 1269.2 L1586.9 1297.1" stroke="#aad3df" fill="none" stroke-linecap="round" stroke-linejoin="round" stroke-width="2.75"/>
<path d="M1659.0 1239.0 L1654.3 1248.3" stroke="#aad3df" fill="none" stroke-linecap="round" stroke-linejoin="round" stroke-width="2.75"/>
<path d="M1612.5 1252.9 L1631.1 1271.5 L1635.7 1285.5 L1626.4 1306.4 L1640.4 1313.3 L1652.0 1341.2 L1659.0 1347.0" stroke="#aad3df" fill="none" stroke-linecap="round" stroke-linejoin="round" stroke-width="2.75"/>
<path d="M1631.1 1280.8 L1649.7 1283.1 L1659.0 1290.1 L1661.3 1315.7 L1663.6 1345.9" stroke="#aad3df" fill="none" stroke-linecap="round" stroke-linejoin="round" stroke-width="2.75"/>
<path d="M1672.9 1308.7 L1670.6 1345.9" stroke="#aad3df" fill="none" stroke-linecap="round" stroke-linejoin="round" stroke-width="2.75"/>
<path d="M1640.4 1285.5 L1649.7 1294.7 L1640.4 1304.0" stroke="#aad3df" fill="none" stroke-linecap="round" stroke-linejoin="round" stroke-width="2.75"/>
<path d="M1454.5 1455.0 L1460.3 1498.0 L1487.1 1492.2 L1533.5 1473.6 L1580.0 1460.8 L1626.4 1459.7 L1675.7 1465.5" stroke="#aad3df" fill="none" stroke-linecap="round" stroke-linejoin="round" stroke-width="3.65"/>
<path d="M1463.8 1455.0 L1461.5 1471.3" stroke="#aad3df" fill="none" stroke-linecap="round" stroke-linejoin="round" stroke-width="3.65"/>
<path d="M1527.7 1451.5 L1537.0 1493.4" stroke="#aad3df" fill="none" stroke-linecap="round" stroke-linejoin="round" stroke-width="3.65"/>
<path d="M1568.4 1444.6 L1574.2 1464.3" stroke="#aad3df" fill="none" stroke-linecap="round" stroke-linejoin="round" stroke-width="3.65"/>
<path d="M1675.7 1462.0 L1649.7 1506.1 L1612.5 1547.9 L1584.6 1552.6 L1563.7 1559.6" stroke="#aad3df" fill="none" stroke-linecap="round" stroke-linejoin="round" stroke-width="3.65"/>
<path d="M1610.2 1547.9 L1663.6 1547.9" stroke="#aad3df" fill="none" stroke-linecap="round" stroke-linejoin="round" stroke-width="3.65"/>
<path d="M1582.3 1552.6 L1584.6 1564.2" stroke="#aad3df" fill="none" stroke-linecap="round" stroke-linejoin="round" stroke-width="3.65"/>
<path d="M1621.8 1547.9 L1626.4 1557.2" stroke="#aad3df" fill="none" stroke-linecap="round" stroke-linejoin="round" stroke-width="3.65"/>
<path d="M1635.7 1547.9 L1638.0 1557.2" stroke="#aad3df" fill="none" stroke-linecap="round" stroke-linejoin="round" stroke-width="3.65"/>
<path d="M1630.9 1282 L1648.8 1286.9 L1647.2 1295 L1634.1 1295 L1627.6 1288.5Z M1624.4 1308 L1653.7 1311.3 L1650.4 1317.8 L1634.1 1318.6Z" fill="#aad3df"/>
<path d="M727.7 1093.4 L740.5 1026.1 L782.3 987.8 L803.2 998.2 L821.8 998.2 L849.7 1026.1 L878.0 1037.7" stroke="#cbc9c5" stroke-width="1.15" fill="none"/>
<path d="M806.7 965.7 L806.7 998.2" stroke="#cbc9c5" stroke-width="1.15" fill="none"/>
<path d="M796.2 975.0 L796.2 1072.5" stroke="#cbc9c5" stroke-width="1.15" fill="none"/>
<path d="M878.0 975.0 L840.4 1128.3" stroke="#cbc9c5" stroke-width="1.15" fill="none"/>
<path d="M766.0 1067.9 L819.5 1067.9" stroke="#cbc9c5" stroke-width="1.15" fill="none"/>
<path d="M775.3 1030.7 L796.2 1030.7" stroke="#cbc9c5" stroke-width="1.15" fill="none"/>
<path d="M849.7 1072.5 L833.4 1105.1" stroke="#cbc9c5" stroke-width="1.15" fill="none"/>
<path d="M603.4 926.2 L612.7 944.8" stroke="#cbc9c5" stroke-width="1.15" fill="none"/>
<path d="M622.0 963.4 L629.0 975.0" stroke="#cbc9c5" stroke-width="1.15" fill="none"/>
<path d="M789.3 998.2 L803.2 998.2 L803.2 1009.8 L791.6 1009.8" stroke="#cbc9c5" stroke-width="1.15" fill="none"/>
<path d="M900.1 937.8 L878.0 988.9" stroke="#cbc9c5" stroke-width="1.15" fill="none"/>
<path d="M966.3 936.7 L917.5 1044.7" stroke="#cbc9c5" stroke-width="1.15" fill="none"/>
<path d="M989.5 984.3 L938.4 1067.9" stroke="#cbc9c5" stroke-width="1.15" fill="none"/>
<path d="M878.0 1054.0 L961.6 1088.8" stroke="#cbc9c5" stroke-width="1.15" fill="none"/>
<path d="M908.2 1028.4 L924.5 1040.0" stroke="#cbc9c5" stroke-width="1.15" fill="none"/>
<path d="M1170.7 1110.9 L1152.1 1119.0 L1126.5 1114.4 L1110.3 1121.3 L1087.1 1146.9 L1070.8 1165.5 L1063.8 1186.4" stroke="#cbc9c5" stroke-width="1.15" fill="none"/>
<path d="M1263.6 961.0 L1257.8 1033.0" stroke="#cbc9c5" stroke-width="1.15" fill="none"/>
<path d="M1217.1 1215.4 L1189.3 1239.1" stroke="#cbc9c5" stroke-width="1.15" fill="none"/>
<path d="M1030.1 1040.0 L1023.2 1047.0 L1031.3 1058.6" stroke="#cbc9c5" stroke-width="1.15" fill="none"/>
<path d="M1180.0 909.9 L1175.3 923.9 L1186.9 954.1" stroke="#cbc9c5" stroke-width="1.15" fill="none"/>
<path d="M1140.5 907.6 L1163.7 930.8" stroke="#cbc9c5" stroke-width="1.15" fill="none"/>
<path d="M1178.8 980.8 L1207.8 965.7" stroke="#cbc9c5" stroke-width="1.15" fill="none"/>
<path d="M1196.2 961.0 L1206.7 976.1" stroke="#cbc9c5" stroke-width="1.15" fill="none"/>
<path d="M1017.4 1095.8 L1031.3 1100.4" stroke="#cbc9c5" stroke-width="1.15" fill="none"/>
<path d="M1008.1 1105.1 L1033.6 1114.4" stroke="#cbc9c5" stroke-width="1.15" fill="none"/>
<path d="M1036.0 1163.1 L1045.2 1163.1 L1038.3 1179.4 L1017.4 1188.7 L1019.7 1198.0 L1008.1 1221.2" stroke="#cbc9c5" stroke-width="1.15" fill="none"/>
<path d="M1101.0 1221.2 L1119.6 1225.8 L1121.9 1237.5" stroke="#cbc9c5" stroke-width="1.15" fill="none"/>
<path d="M1080.1 1239.1 L1082.4 1230.5 L1105.6 1220.0" stroke="#cbc9c5" stroke-width="1.15" fill="none"/>
<path d="M1491.7 896.0 L1488.2 940.1 L1475.4 942.5 L1452.2 1021.4" stroke="#cbc9c5" stroke-width="1.15" fill="none"/>
<path d="M1419.7 1009.8 L1412.7 1040.0" stroke="#cbc9c5" stroke-width="1.15" fill="none"/>
<path d="M1366.3 1033.0 L1357.0 1098.1" stroke="#cbc9c5" stroke-width="1.15" fill="none"/>
<path d="M1426.7 955.2 L1463.8 970.3 L1494.0 993.6" stroke="#cbc9c5" stroke-width="1.15" fill="none"/>
<path d="M1419.7 1009.8 L1454.5 1021.4 L1482.4 1033.0 L1501.0 1043.5" stroke="#cbc9c5" stroke-width="1.15" fill="none"/>
<path d="M1366.3 1033.0 L1377.9 1035.4" stroke="#cbc9c5" stroke-width="1.15" fill="none"/>
<path d="M1491.7 919.2 L1510.3 919.2 L1508.0 933.2 L1491.7 933.2" stroke="#cbc9c5" stroke-width="1.15" fill="none"/>
<path d="M1571.8 1077.2 L1571.8 1058.6 L1593.9 1058.6" stroke="#cbc9c5" stroke-width="1.15" fill="none"/>
<path d="M1582.3 1077.2 L1582.3 1067.9 L1593.9 1067.9" stroke="#cbc9c5" stroke-width="1.15" fill="none"/>
<path d="M1652.0 991.2 L1640.4 965.7" stroke="#cbc9c5" stroke-width="1.15" fill="none"/>
<path d="M987.2 1239.0 L980.2 1257.6" stroke="#cbc9c5" stroke-width="1.15" fill="none"/>
<path d="M1015.0 1243.6 L1008.1 1257.6 L1010.4 1264.6" stroke="#cbc9c5" stroke-width="1.15" fill="none"/>
<path d="M1056.9 1248.3 L1056.9 1278.5" stroke="#cbc9c5" stroke-width="1.15" fill="none"/>
<path d="M1189.3 1243.6 L1163.7 1285.5" stroke="#cbc9c5" stroke-width="1.15" fill="none"/>
<path d="M1221.8 1259.9 L1180.0 1315.7" stroke="#cbc9c5" stroke-width="1.15" fill="none"/>
<path d="M1217.1 1239.0 L1149.8 1297.1" stroke="#cbc9c5" stroke-width="1.15" fill="none"/>
<path d="M1198.6 1252.9 L1221.8 1259.9 L1249.7 1257.6" stroke="#cbc9c5" stroke-width="1.15" fill="none"/>
<path d="M1191.6 1278.5 L1210.2 1284.3" stroke="#cbc9c5" stroke-width="1.15" fill="none"/>
<path d="M1040.6 1239.0 L1040.6 1248.3" stroke="#cbc9c5" stroke-width="1.15" fill="none"/>
<path d="M1082.4 1239.0 L1082.4 1248.3" stroke="#cbc9c5" stroke-width="1.15" fill="none"/>
<path d="M1110.3 1239.0 L1119.6 1248.3 L1124.2 1269.2" stroke="#cbc9c5" stroke-width="1.15" fill="none"/>
<clipPath id="uc"><path d="M758.6 1063.7 L766.0 1071.1 L801.3 1082.3 L819.9 1101.8 L836.6 1111.1 L873.8 1109.2 L881.2 1094.3 L888.7 1075.8 L899.8 1050.7 L933.3 1042.3 L938.8 1055.3 L950.0 1060.0 L951.9 1081.3 L968.6 1094.3 L996.5 1099.9 L1007.6 1087.8 L1018.8 1094.3 L998.3 1118.5 L981.6 1135.2 L1009.5 1138.9 L1003.9 1150.1 L972.3 1161.2 L987.2 1170.5 L979.7 1187.3 L1000.2 1205.8 L1029.9 1222.6 L1033.6 1233.7 L1026.2 1243.0 L1020 1244 L1008 1240.5 L982.5 1230 L962 1225 L948 1233 L940 1238 L927.1 1230.5 L913.2 1224 L883.6 1208.5 L866 1195 L857.4 1184 L840.4 1171 L826.4 1159.5 L803.2 1141 L780 1125 L762 1108 L757 1095 L762 1080Z"/></clipPath>
<path d="M718.4 1083.0 L783.4 989.4 M728.3 1085.1 L779.4 1011.7 M738.3 1083.0 L792.3 1005.4 M749.6 1082.7 L808.3 998.2 M746.5 1104.6 L823.8 993.3 M755.0 1104.2 L837.9 985.0 M765.6 1105.6 L838.1 1001.1 M771.5 1109.9 L840.5 1010.6 M762.6 1138.6 L859.2 999.7 M785.8 1120.8 L867.2 1003.8 M798.1 1119.0 L855.6 1036.4 M794.5 1139.5 L884.4 1010.2 M793.8 1155.8 L859.7 1060.9 M818.5 1132.1 L876.6 1048.6 M811.6 1158.8 L887.7 1049.3 M819.0 1162.0 L897.0 1049.7 M839.1 1148.7 L908.4 1049.0 M846.1 1155.1 L928.8 1036.1 M836.5 1182.7 L929.8 1048.4 M861.2 1163.2 L926.0 1070.0 M851.6 1190.8 L942.7 1059.8 M859.8 1193.2 L918.6 1108.7 M883.7 1174.9 L927.4 1112.1 M877.3 1198.8 L936.7 1113.4 M891.0 1191.9 L970.9 1076.8 M893.7 1201.8 L944.1 1129.2 M896.2 1215.9 L986.5 1086.0 M907.9 1215.0 L998.9 1084.1 M903.1 1233.9 L988.0 1111.8 M912.0 1234.8 L986.5 1127.7 M919.8 1241.0 L980.6 1153.5 M931.1 1240.7 L1024.9 1105.8 M939.6 1243.5 L1012.1 1139.2 M951.5 1239.6 L1023.3 1136.3 M958.1 1245.2 L1044.1 1121.3 M960.6 1256.2 L1042.2 1138.8 M963.8 1265.4 L1058.6 1128.9 M977.2 1262.1 L1027.9 1189.2 M984.6 1265.9 L1034.9 1193.6 M993.4 1269.0 L1044.0 1196.1 M996.6 1279.3 L1075.7 1165.4 M1008.2 1276.3 L1084.2 1166.9 M999.4 1302.3 L1087.7 1175.3 M1013.6 1300.9 L1088.8 1192.8 M1021.0 1303.5 L1090.9 1202.9 M732.9 1102.6 L1000.1 1288.3 M738.8 1095.1 L1015.7 1287.6 M755.2 1094.2 L1018.9 1277.5 M740.7 1073.4 L1028.3 1273.3 M744.1 1064.0 L1012.6 1250.6 M744.6 1054.1 L1011.5 1239.6 M792.0 1074.5 L1023.6 1235.4 M759.3 1041.7 L1023.1 1225.1 M805.8 1061.9 L1035.1 1221.3 M767.4 1022.3 L1045.0 1215.3 M812.2 1041.8 L1068.2 1219.8 M787.3 1012.9 L1071.8 1210.7 M823.0 1027.6 L1050.7 1185.9 M798.9 997.7 L1081.9 1194.4 M807.4 992.5 L1065.7 1172.0 M816.4 987.7 L1100.0 1184.8 M798.6 963.0 L1106.7 1177.1 M860.4 996.5 L1082.9 1151.2 M862.4 986.6 L1076.1 1135.1" stroke="#d1cfcc" stroke-width="1.05" fill="none" clip-path="url(#uc)"/>
<path d="M598.8 896.0 L608.1 923.9 L622.0 954.1 L636.0 979.6 L654.5 1002.9 L675.4 1023.8 L698.7 1042.3 L721.9 1056.3 L735.8 1060.9 L752.1 1060.9" stroke="#c6c4c0" stroke-width="3.6" fill="none" stroke-linejoin="round"/>
<path d="M752.1 1060.9 L762.6 1067.9 L762.6 1088.8 L756.7 1102.7 L763.7 1119.0 L791.6 1135.3 L814.8 1146.9 L840.4 1163.1 L861.3 1188.7 L878.0 1200.3 L901.2 1204.9 L936.1 1198.0 L954.7 1221.2 L982.5 1228.2 L1008.1 1239.1 L1026.7 1248.3" stroke="#c6c4c0" stroke-width="3.6" fill="none" stroke-linejoin="round"/>
<path d="M1026.7 1248.3 L1101.0 1248.3 L1102.2 1273.8 L1117.3 1282.0 L1121.9 1278.5 L1133.5 1284.3 L1180.0 1290.1 L1226.4 1297.1 L1278.0 1300.6 L1298.9 1299.4 L1336.1 1318.0 L1398.8 1338.9 L1408.1 1329.6 L1440.6 1324.9 L1487.1 1313.3 L1521.9 1297.1 L1575.3 1293.6 L1612.5 1247.1 L1640.4 1276.2 L1675.7 1282.0" stroke="#c6c4c0" stroke-width="3.6" fill="none" stroke-linejoin="round"/>
<path d="M1196.2 906.5 L1203.2 921.6 L1226.4 940.1 L1249.7 956.4 L1278.0 958.7 L1327.9 918.1 L1357.0 934.3 L1366.3 907.6 L1370.9 896.0" stroke="#c6c4c0" stroke-width="3.6" fill="none" stroke-linejoin="round"/>
<path d="M1327.9 918.1 L1319.8 896.0" stroke="#c6c4c0" stroke-width="3.6" fill="none" stroke-linejoin="round"/>
<path d="M1210.2 896.0 L1196.2 906.5 L1152.1 926.2 L1133.5 965.7 L1112.6 981.9 L1082.4 1023.8 L1045.2 1047.0 L1026.7 1077.2 L994.1 1116.7 L970.9 1158.5 L954.7 1186.4 L936.1 1198.0" stroke="#c6c4c0" stroke-width="3.7" fill="none" stroke-linejoin="round"/>
<path d="M1408.1 896.0 L1426.7 912.3 L1475.4 940.1 L1501.0 950.6 L1549.8 951.7 L1580.0 945.9 L1626.4 941.3 L1675.7 930.8" stroke="#c6c4c0" stroke-width="3.7" fill="none" stroke-linejoin="round"/>
<path d="M598.8 896.0 L608.1 923.9 L622.0 954.1 L636.0 979.6 L654.5 1002.9 L675.4 1023.8 L698.7 1042.3 L721.9 1056.3 L735.8 1060.9 L752.1 1060.9" stroke="#fff" stroke-width="2.2" fill="none" stroke-linejoin="round"/>
<path d="M752.1 1060.9 L762.6 1067.9 L762.6 1088.8 L756.7 1102.7 L763.7 1119.0 L791.6 1135.3 L814.8 1146.9 L840.4 1163.1 L861.3 1188.7 L878.0 1200.3 L901.2 1204.9 L936.1 1198.0 L954.7 1221.2 L982.5 1228.2 L1008.1 1239.1 L1026.7 1248.3" stroke="#fff" stroke-width="2.2" fill="none" stroke-linejoin="round"/>
<path d="M1026.7 1248.3 L1101.0 1248.3 L1102.2 1273.8 L1117.3 1282.0 L1121.9 1278.5 L1133.5 1284.3 L1180.0 1290.1 L1226.4 1297.1 L1278.0 1300.6 L1298.9 1299.4 L1336.1 1318.0 L1398.8 1338.9 L1408.1 1329.6 L1440.6 1324.9 L1487.1 1313.3 L1521.9 1297.1 L1575.3 1293.6 L1612.5 1247.1 L1640.4 1276.2 L1675.7 1282.0" stroke="#fff" stroke-width="2.2" fill="none" stroke-linejoin="round"/>
<path d="M1196.2 906.5 L1203.2 921.6 L1226.4 940.1 L1249.7 956.4 L1278.0 958.7 L1327.9 918.1 L1357.0 934.3 L1366.3 907.6 L1370.9 896.0" stroke="#fff" stroke-width="2.2" fill="none" stroke-linejoin="round"/>
<path d="M1327.9 918.1 L1319.8 896.0" stroke="#fff" stroke-width="2.2" fill="none" stroke-linejoin="round"/>
<path d="M1210.2 896.0 L1196.2 906.5 L1152.1 926.2 L1133.5 965.7 L1112.6 981.9 L1082.4 1023.8 L1045.2 1047.0 L1026.7 1077.2 L994.1 1116.7 L970.9 1158.5 L954.7 1186.4 L936.1 1198.0" stroke="#fff" stroke-width="2.15" fill="none" stroke-linejoin="round"/>
<path d="M1408.1 896.0 L1426.7 912.3 L1475.4 940.1 L1501.0 950.6 L1549.8 951.7 L1580.0 945.9 L1626.4 941.3 L1675.7 930.8" stroke="#fff" stroke-width="2.15" fill="none" stroke-linejoin="round"/>
<path d="M473.4 1329.6 L498.9 1357.5 L522.1 1392.3 L540.7 1406.2 L559.3 1416.7 L589.5 1410.9 L608.1 1424.8 L631.3 1443.4 L659.2 1458.5 L675.4 1460.8 L705.6 1472.4 L708.0 1485.2 L740.5 1501.5 L770.7 1522.4 L768.4 1534.0 L803.2 1552.6 L838.0 1561.9 L878.0 1568.8 L910.5 1580.5 L924.5 1587.4" stroke="#d8da8c" stroke-width="5.4" fill="none" stroke-linejoin="round"/>
<path d="M473.4 1329.6 L498.9 1357.5 L522.1 1392.3 L540.7 1406.2 L559.3 1416.7 L589.5 1410.9 L608.1 1424.8 L631.3 1443.4 L659.2 1458.5 L675.4 1460.8 L705.6 1472.4 L708.0 1485.2 L740.5 1501.5 L770.7 1522.4 L768.4 1534.0 L803.2 1552.6 L838.0 1561.9 L878.0 1568.8 L910.5 1580.5 L924.5 1587.4" stroke="#f6f9a6" stroke-width="4" fill="none" stroke-linejoin="round"/>
<path d="M473.4 1090.2 L570.9 1158.5 L640.6 1204.9 L698.7 1239.1 L696.4 1239 L878 1336.6 L936 1357.5 L1003.4 1383 L1066.2 1407.4" stroke="#9e6c9e" stroke-opacity="0.47" fill="none" stroke-linejoin="round" stroke-width="2.3" stroke-dasharray="17 4.5 3 4.5"/>
<path d="M981.8 890 L982.5 942.5 L989.5 972.7 L1001 1044.7 L1030 1065.6 L1106.8 1059.8 L1278 1087.6 L1354.7 1100.4 L1482.4 1153.8 L1680 1156.2" stroke="#9e6c9e" stroke-opacity="0.47" fill="none" stroke-linejoin="round" stroke-width="2.3" stroke-dasharray="17 4.5 3 4.5"/>
<path d="M1226.4 1413.2 L1218.3 1494.5 L1245 1584" stroke="#9e6c9e" stroke-opacity="0.47" fill="none" stroke-linejoin="round" stroke-width="2.3" stroke-dasharray="17 4.5 3 4.5"/>
<path d="M1066.2 1407.4 L1226.4 1408.6" stroke="#9e6c9e" stroke-opacity="0.47" fill="none" stroke-linejoin="round" stroke-width="2.9" stroke-dasharray="18 5 3.5 5"/>
<path d="M1226.4 1408.6 L1278 1404.4 L1347.7 1399.3 L1463.8 1401.6 L1556.7 1397 L1635.7 1389.5 L1680 1397" stroke="#9e6c9e" stroke-opacity="0.47" fill="none" stroke-linejoin="round" stroke-width="3.1" stroke-dasharray="13 6"/>
<path d="M474 1032.5 L649.9 1162 L638.3 1166.6" stroke="#6b7ff0" stroke-opacity="0.8" fill="none" stroke-width="1.7" stroke-dasharray="9 9" stroke-linejoin="round"/>
<path d="M474 1049 L660 1170 L765 1239 L892 1330 L936 1357.5 L945.4 1380.7 L1008 1406.2 L1063.8 1428.3 L1278 1422.5 L1370.9 1420 L1487 1412 L1580 1402 L1638 1397 L1680 1402" stroke="#6b7ff0" stroke-opacity="0.8" fill="none" stroke-width="1.7" stroke-dasharray="9 9" stroke-linejoin="round"/>
<path d="M660 1170 L720 1180 L800 1193 L868 1205" stroke="#6b7ff0" stroke-opacity="0.8" fill="none" stroke-width="1.7" stroke-dasharray="9 9" stroke-linejoin="round"/>
<path d="M846.9 1202.6 L874.8 1206" stroke="#6b7ff0" stroke-opacity="0.8" fill="none" stroke-width="1.7" stroke-dasharray="9 9" stroke-linejoin="round"/>
<path d="M883.5 1227 L892 1246 L910.5 1290 L936 1357.5" stroke="#6b7ff0" stroke-opacity="0.8" fill="none" stroke-width="1.7" stroke-dasharray="9 9" stroke-linejoin="round"/>
<path d="M845 1268.9 L882.6 1280.8 L908.2 1287.8 L989.5 1313.3 L1110.3 1355.1 L1249.7 1399.3 L1278 1409.7 L1313 1410 L1400 1408 L1520 1400 L1640 1392 L1680 1396" stroke="#6b7ff0" stroke-opacity="0.8" fill="none" stroke-width="1.7" stroke-dasharray="9 9" stroke-linejoin="round"/>
<path d="M1003.4 1276.2 L989.5 1280.8 L988.3 1308.7 L1003.4 1383 L1017.4 1436.4 L1063.8 1573.5 L1068 1584" stroke="#6b7ff0" stroke-opacity="0.8" fill="none" stroke-width="1.7" stroke-dasharray="9 9" stroke-linejoin="round"/>
<path d="M1336 1411 L1313 1422 L1278 1448 L1218.3 1494.5 L1115 1584" stroke="#6b7ff0" stroke-opacity="0.8" fill="none" stroke-width="1.7" stroke-dasharray="9 9" stroke-linejoin="round"/>
<path d="M1278 1432 L1313 1424 L1380 1418" stroke="#6b7ff0" stroke-opacity="0.8" fill="none" stroke-width="1.7" stroke-dasharray="9 9" stroke-linejoin="round"/>
</g>
<g font-family="&quot;DejaVu Sans&quot;,&quot;Liberation Sans&quot;,sans-serif" fill="#4c4c4c" stroke="#fff" stroke-opacity="0.75" stroke-width="2.6" paint-order="stroke" stroke-linejoin="round" filter="url(#soft2)"><defs><filter id="soft2" x="0" y="0" width="100%" height="100%" filterUnits="userSpaceOnUse"><feGaussianBlur stdDeviation="0.55"/></filter></defs>
<text x="591.5" y="925.9" font-size="15.1" textLength="54.5" lengthAdjust="spacingAndGlyphs">Sebauk</text>
<text x="591.5" y="925.9" font-size="15.1" textLength="54.5" lengthAdjust="spacingAndGlyphs" stroke="#4c4c4c" stroke-opacity="1" stroke-width="0.25">Sebauk</text>
<text x="648.6" y="998.9" font-size="15.1" textLength="78.2" lengthAdjust="spacingAndGlyphs">Pangkalan</text>
<text x="648.6" y="998.9" font-size="15.1" textLength="78.2" lengthAdjust="spacingAndGlyphs" stroke="#4c4c4c" stroke-opacity="1" stroke-width="0.25">Pangkalan</text>
<text x="661.3" y="1019.9" font-size="15.1" textLength="53.1" lengthAdjust="spacingAndGlyphs">Batang</text>
<text x="661.3" y="1019.9" font-size="15.1" textLength="53.1" lengthAdjust="spacingAndGlyphs" stroke="#4c4c4c" stroke-opacity="1" stroke-width="0.25">Batang</text>
<text x="782.0" y="1047.7" font-size="15.1" textLength="58.4" lengthAdjust="spacingAndGlyphs">Pedekik</text>
<text x="782.0" y="1047.7" font-size="15.1" textLength="58.4" lengthAdjust="spacingAndGlyphs" stroke="#4c4c4c" stroke-opacity="1" stroke-width="0.25">Pedekik</text>
<text x="890.8" y="1122.1" font-size="15.1" textLength="70.8" lengthAdjust="spacingAndGlyphs">Wonosari</text>
<text x="890.8" y="1122.1" font-size="15.1" textLength="70.8" lengthAdjust="spacingAndGlyphs" stroke="#4c4c4c" stroke-opacity="1" stroke-width="0.25">Wonosari</text>
<text x="832.0" y="1157.0" font-size="21.5" textLength="94.3" lengthAdjust="spacingAndGlyphs">Bengkalis</text>
<text x="832.0" y="1157.0" font-size="21.5" textLength="94.3" lengthAdjust="spacingAndGlyphs" stroke="#4c4c4c" stroke-opacity="1" stroke-width="0.25">Bengkalis</text>
<text x="972.0" y="1159.2" font-size="15.1" textLength="72.8" lengthAdjust="spacingAndGlyphs">Senggoro</text>
<text x="972.0" y="1159.2" font-size="15.1" textLength="72.8" lengthAdjust="spacingAndGlyphs" stroke="#4c4c4c" stroke-opacity="1" stroke-width="0.25">Senggoro</text>
<text x="857.9" y="1186.0" font-size="15.1" textLength="140.9" lengthAdjust="spacingAndGlyphs">Rimba Sekampung</text>
<text x="857.9" y="1186.0" font-size="15.1" textLength="140.9" lengthAdjust="spacingAndGlyphs" stroke="#4c4c4c" stroke-opacity="1" stroke-width="0.25">Rimba Sekampung</text>
<text x="878.5" y="1219.6" font-size="15.1" textLength="97.1" lengthAdjust="spacingAndGlyphs">Kebun Kapas</text>
<text x="878.5" y="1219.6" font-size="15.1" textLength="97.1" lengthAdjust="spacingAndGlyphs" stroke="#4c4c4c" stroke-opacity="1" stroke-width="0.25">Kebun Kapas</text>
<text x="1347.7" y="912.5" font-size="15.1" textLength="76.2" lengthAdjust="spacingAndGlyphs">Selat Baru</text>
<text x="1347.7" y="912.5" font-size="15.1" textLength="76.2" lengthAdjust="spacingAndGlyphs" stroke="#4c4c4c" stroke-opacity="1" stroke-width="0.25">Selat Baru</text>
<text x="1152.0" y="956.7" font-size="15.1" textLength="83.7" lengthAdjust="spacingAndGlyphs">Bantan Tua</text>
<text x="1152.0" y="956.7" font-size="15.1" textLength="83.7" lengthAdjust="spacingAndGlyphs" stroke="#4c4c4c" stroke-opacity="1" stroke-width="0.25">Bantan Tua</text>
<text x="1640.4" y="968.3" font-size="15.1" textLength="38.6" lengthAdjust="spacingAndGlyphs">Belas</text>
<text x="1640.4" y="968.3" font-size="15.1" textLength="38.6" lengthAdjust="spacingAndGlyphs" stroke="#4c4c4c" stroke-opacity="1" stroke-width="0.25">Belas</text>
<text x="1403.4" y="1004.8" font-size="15.1" textLength="113.9" lengthAdjust="spacingAndGlyphs">Bantan Tengah</text>
<text x="1403.4" y="1004.8" font-size="15.1" textLength="113.9" lengthAdjust="spacingAndGlyphs" stroke="#4c4c4c" stroke-opacity="1" stroke-width="0.25">Bantan Tengah</text>
<text x="1068.5" y="1269.9" font-size="15.1" textLength="94.0" lengthAdjust="spacingAndGlyphs">Sungai Alam</text>
<text x="1068.5" y="1269.9" font-size="15.1" textLength="94.0" lengthAdjust="spacingAndGlyphs" stroke="#4c4c4c" stroke-opacity="1" stroke-width="0.25">Sungai Alam</text>
<text x="1250.0" y="1266.8" font-size="15.1" textLength="66.3" lengthAdjust="spacingAndGlyphs">Penampi</text>
<text x="1250.0" y="1266.8" font-size="15.1" textLength="66.3" lengthAdjust="spacingAndGlyphs" stroke="#4c4c4c" stroke-opacity="1" stroke-width="0.25">Penampi</text>
<text x="1455.7" y="1281.6" font-size="15.1" textLength="65.0" lengthAdjust="spacingAndGlyphs">Temeran</text>
<text x="1455.7" y="1281.6" font-size="15.1" textLength="65.0" lengthAdjust="spacingAndGlyphs" stroke="#4c4c4c" stroke-opacity="1" stroke-width="0.25">Temeran</text>
<text x="1624.0" y="1307.1" font-size="15.1" textLength="55.0" lengthAdjust="spacingAndGlyphs">Peneba</text>
<text x="1624.0" y="1307.1" font-size="15.1" textLength="55.0" lengthAdjust="spacingAndGlyphs" stroke="#4c4c4c" stroke-opacity="1" stroke-width="0.25">Peneba</text>
</g>
<g font-family="&quot;DejaVu Sans&quot;,&quot;Liberation Sans&quot;,sans-serif" fill="#976c95" stroke="#fff" stroke-opacity="0.7" stroke-width="2.4" paint-order="stroke" stroke-linejoin="round" filter="url(#soft2)">
<text transform="translate(564.0 1174.7) rotate(31.9)" x="0" y="5.3" font-size="14.6" textLength="169.7" lengthAdjust="spacingAndGlyphs">Kecamatan Bukit Batu</text>
<text transform="translate(831.0 1292.4) rotate(23.9)" x="0" y="5.3" font-size="14.6" textLength="160.7" lengthAdjust="spacingAndGlyphs">Kecamatan Bengkalis</text>
<text transform="translate(1393.0 1099.3) rotate(17.5)" x="0" y="5.3" font-size="14.6" textLength="142.5" lengthAdjust="spacingAndGlyphs">Kecamatan Bantan</text>
<text transform="translate(1407.0 1385.3) rotate(-1.2)" x="0" y="5.3" font-size="14.6" textLength="160.2" lengthAdjust="spacingAndGlyphs">Kabupaten Bengkalis</text>
<text transform="translate(1380.2 1417.9) rotate(-1.7)" x="0" y="5.3" font-size="14.6" textLength="230.1" lengthAdjust="spacingAndGlyphs">Kabupaten Kepulauan Meranti</text>
<text transform="translate(1657.8 1412.5) rotate(4.7)" x="0" y="5.3" font-size="14.6" textLength="18.3" lengthAdjust="spacingAndGlyphs">Ke</text>
</g>
<defs><linearGradient id="mg" x1="0" y1="0" x2="0" y2="1"><stop offset="0" stop-color="#3aa8dc"/><stop offset="1" stop-color="#30a0d6"/></linearGradient><filter id="mblur" x="-50%" y="-50%" width="200%" height="200%"><feGaussianBlur stdDeviation="3"/></filter></defs>
<path d="M1068 1242 L1076 1230 L1094 1219 L1103 1219 L1097 1230 L1080 1240 Z" fill="#000" fill-opacity="0.48" filter="url(#mblur)"/>
<path d="M1068 1242.5 C1063 1232 1048 1221 1048 1207 C1048 1195.5 1057 1187.3 1068 1187.3 C1079 1187.3 1088 1195.5 1088 1207 C1088 1221 1073 1232 1068 1242.5Z" fill="url(#mg)" stroke="#2a8fc0" stroke-width="0.8"/>
<g fill="none" stroke="#fff" stroke-linecap="round"><path d="M1056.8 1201.5 A16.5 16.5 0 0 1 1079.2 1201.5" stroke-width="2.1"/><path d="M1060.8 1206 A10.5 10.5 0 0 1 1075.2 1206" stroke-width="2.1"/></g><circle cx="1068" cy="1210.4" r="2.8" fill="#fff"/>
</svg>
<div class="abs" style="left:13.9px;top:13.8px;width:46.4px;height:88.6px;border:2.75px solid rgba(0,0,0,0.22);border-radius:6px;background:#fff;background-clip:padding-box"></div>
<div class="abs" style="left:16.6px;top:56.8px;width:41px;height:1.2px;background:#ccc"></div>
<svg style="left:0;top:0" width="80" height="110" viewBox="0 0 80 110" stroke="#111" stroke-width="2.3"><path d="M29.6 37.8 H44.8 M37.2 30.2 V45.4 M29.8 79.6 H44.6"/></svg>
<div class="abs" style="left:878px;top:663px;width:321px;height:22px;background:rgba(255,255,255,0.8)"></div>
<div class="abs" style="left:884.4px;top:668.8px;width:16px;height:5px;background:#4c7be1"></div><div class="abs" style="left:884.4px;top:673.8px;width:16px;height:5px;background:#ffd500"></div>
<span class="t" id="at" style="left:906.1px;top:658.2px;font-size:16.4px;color:#333"><span style="color:#0078a8">Leaflet</span> <span style="color:#333">|</span> © <span style="color:#0078a8">OpenStreetMap</span> contributors</span>
</div>
</body>
</html>
